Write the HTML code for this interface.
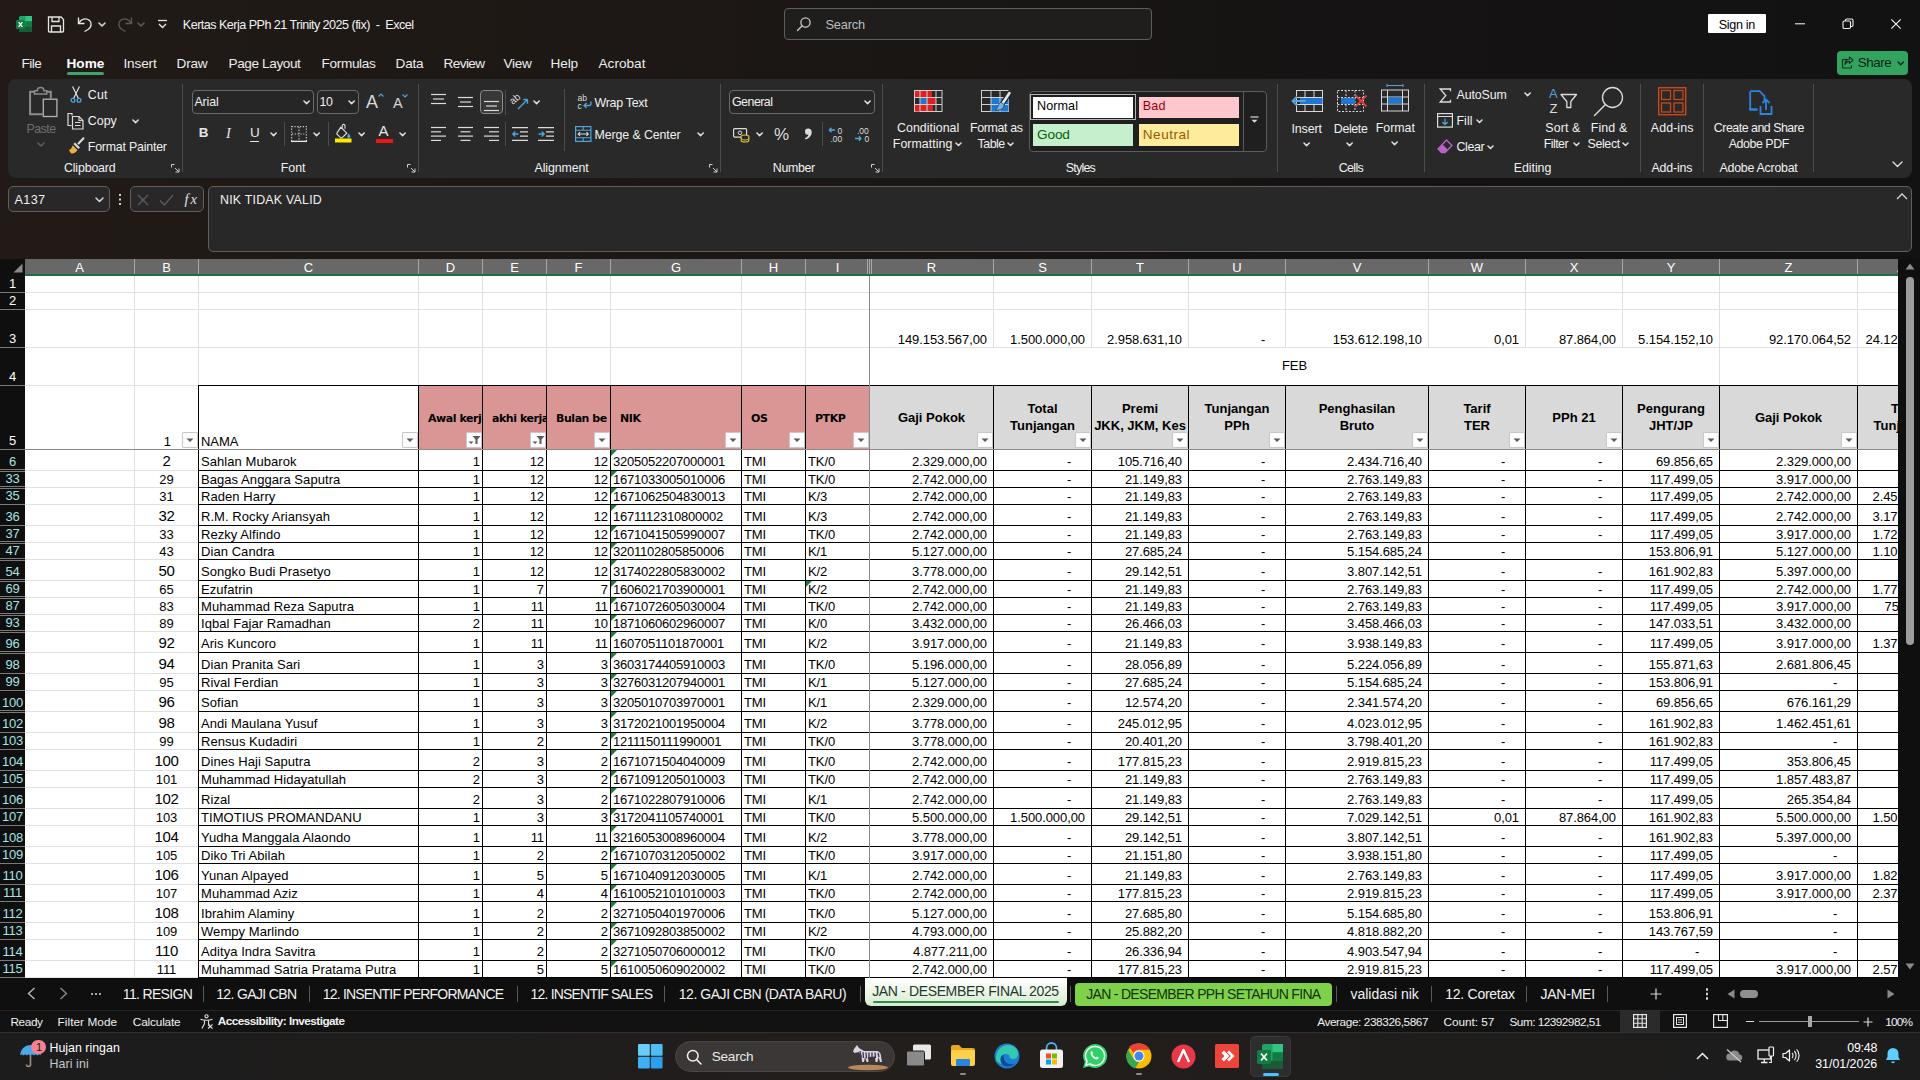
<!DOCTYPE html>
<html lang="id"><head><meta charset="utf-8"><title>Kertas Kerja PPh 21 Trinity 2025 (fix) - Excel</title>
<style>
html,body{margin:0;padding:0}
body{width:1920px;height:1080px;overflow:hidden;position:relative;background:linear-gradient(90deg,#211a16 0,#1d1815 35%,#151313 70%,#131212 100%);font-family:"Liberation Sans",sans-serif}
i{font-style:normal;display:block}

.ab{position:absolute;display:block}
svg.ab{overflow:visible}
.t{position:absolute;white-space:pre}
.bxr{box-sizing:border-box;border:1px solid #6a6a6a;border-radius:4px;background:#262626}

.sheet{position:absolute;left:0;top:0;width:1898px;height:978px;overflow:hidden}
.sheet:before{content:"";position:absolute;left:25px;top:276px;width:1873px;height:702px;background:#fff}
.gv{position:absolute;width:1px;background:#e1e1e1}
.gh{position:absolute;height:1px;background:#e1e1e1}
.merge{position:absolute;background:#fff}
.bx{position:absolute;box-sizing:border-box;border:1px solid #000}
.bx.pink{background:#da9694}
.bx.gray{background:#d9d9d9}
.c13{font:13px/16px "Liberation Sans",sans-serif;color:#000;letter-spacing:-0.08px;white-space:nowrap}
.c15{font:15px/18px "Liberation Sans",sans-serif;color:#000;letter-spacing:-0.3px;white-space:nowrap}
.nik{letter-spacing:-0.23px}
.nm{letter-spacing:0.06px}
.ph{position:absolute;left:9px;top:25px;font:bold 11px/16px "DejaVu Sans",sans-serif;color:#000;white-space:nowrap;letter-spacing:-0.45px}
.bx.pink{overflow:hidden}
.gh2{position:absolute;left:0;right:0;top:50%;margin-top:-1px;transform:translateY(-50%);text-align:center;font:bold 13px/17px "Liberation Sans",sans-serif;color:#000;white-space:nowrap;letter-spacing:0px}
.bx.gray{overflow:hidden}
.fb{position:absolute;width:16px;height:16px;background:#fcfcfc;box-sizing:border-box;border:1px solid #c8c8c8;border-radius:1px}
.fb svg{position:absolute;left:-1px;top:-1px}
.tri{position:absolute;width:0;height:0;border-top:6px solid #1e7d3c;border-right:6px solid transparent}
.colhdr{position:absolute;left:25px;top:259px;width:1873px;height:15px;background:#686868;border-bottom:2px solid #1b7145;overflow:hidden}
.colhdr .ch{position:absolute;top:1px;height:15px;margin-left:-25px;font:13px/16px "Liberation Sans",sans-serif;color:#fff;text-align:center}
.colhdr .chl{position:absolute;top:0;width:1px;height:15px;margin-left:-25px;background:#a8a8a8}
.corner{position:absolute;left:0;top:259px;width:25px;height:17px;background:#0f0f0f}
.rowhdr{position:absolute;left:0;top:0;width:25px;height:978px;overflow:hidden}
.rowhdr:before{content:"";position:absolute;left:0;top:276px;width:25px;height:702px;background:#0f0f0f}
.rh{position:absolute;left:0;width:25px;font:13px "Liberation Sans",sans-serif;color:#fff;text-align:center;letter-spacing:-0.3px;overflow:hidden}
.rh.f{color:#a6e3e3}
.rhl{position:absolute;left:0;width:25px;height:1px;background:#7a7a7a}
</style></head>
<body>
<div id="titlebar">
<svg class="ab" style="left:16px;top:16px" width="16" height="16" viewBox="0 0 16 16"><rect x="3" y="0" width="13" height="16" rx="1.5" fill="#21a366"/><rect x="9.5" y="0" width="6.5" height="5.3" fill="#33c481"/><rect x="9.5" y="5.3" width="6.5" height="5.3" fill="#107c41"/><rect x="3" y="10.6" width="13" height="5.4" fill="#185c37"/><rect x="0" y="4" width="9" height="9" rx="1" fill="#107c41"/><path d="M2.6 6.2L6.4 10.8M6.4 6.2L2.6 10.8" stroke="#fff" stroke-width="1.3"/></svg>
<svg class="ab" style="left:47px;top:16px" width="18" height="17" viewBox="0 0 18 17"><path d="M1.5 1h12.5l2.5 2.5V15a1 1 0 0 1-1 1H2.5a1 1 0 0 1-1-1z" fill="none" stroke="#e6e6e6" stroke-width="1.3"/><path d="M5 1v4.5h7V1M4.5 16v-6h9v6" fill="none" stroke="#e6e6e6" stroke-width="1.3"/></svg>
<svg class="ab" style="left:76px;top:15px" width="18" height="18" viewBox="0 0 18 18"><path d="M2.5 2.5V8.5H8.5" fill="none" stroke="#e6e6e6" stroke-width="1.4"/><path d="M2.8 8.2C5 4 10 2.5 13.3 5.3c3 2.6 2.2 7-1.3 9.2L8.5 16.5" fill="none" stroke="#e6e6e6" stroke-width="1.4"/></svg>
<svg class="ab" style="left:98.00px;top:21.50px" width="8" height="5.0" viewBox="-1 -1 8 5.0"><path d="M0 0 L3.0 3.0 L6 0" fill="none" stroke="#d8d8d8" stroke-width="1.6" stroke-linecap="round" stroke-linejoin="round"/></svg>
<svg class="ab" style="left:116px;top:15px" width="18" height="18" viewBox="0 0 18 18"><path d="M15.5 2.5V8.5H9.5" fill="none" stroke="#5c5a58" stroke-width="1.4"/><path d="M15.2 8.2C13 4 8 2.5 4.7 5.3c-3 2.6-2.2 7 1.3 9.2L9.5 16.5" fill="none" stroke="#5c5a58" stroke-width="1.4"/></svg>
<svg class="ab" style="left:137.00px;top:21.50px" width="8" height="5.0" viewBox="-1 -1 8 5.0"><path d="M0 0 L3.0 3.0 L6 0" fill="none" stroke="#5c5a58" stroke-width="1.6" stroke-linecap="round" stroke-linejoin="round"/></svg>
<svg class="ab" style="left:157px;top:19px" width="11" height="10" viewBox="0 0 11 10"><path d="M1 1.5H10" stroke="#e6e6e6" stroke-width="1.3"/><path d="M2 5L5.5 8.5L9 5" fill="none" stroke="#e6e6e6" stroke-width="1.3"/></svg>
<span class="t" style="left:182.80px;top:15.20px;font: 400 12.6px/20px 'Liberation Sans',sans-serif;color:#f2f2f2;letter-spacing:-0.531px">Kertas Kerja PPh 21 Trinity 2025 (fix)  -  Excel</span>
<div class="ab" style="left:784px;top:8px;width:368px;height:32px;box-sizing:border-box;border:1px solid #5f5d5b;border-radius:4px;background:#1f1e1d"></div>
<svg class="ab" style="left:796px;top:16px" width="16" height="16" viewBox="0 0 16 16"><circle cx="9.5" cy="6.5" r="4.6" fill="none" stroke="#c8c8c8" stroke-width="1.3"/><path d="M6.2 9.8L1.5 14.5" stroke="#c8c8c8" stroke-width="1.4" stroke-linecap="round"/></svg>
<span class="t" style="left:825.50px;top:15.00px;font: 400 12.8px/20px 'Liberation Sans',sans-serif;color:#bdbdbd;letter-spacing:-0.174px">Search</span>
<div class="ab" style="left:1708px;top:14px;width:58px;height:19px;background:#fff;border-radius:1px"></div>
<span class="t" style="left:1718.80px;top:15.00px;font: 400 12.6px/20px 'Liberation Sans',sans-serif;color:#000;letter-spacing:-0.331px">Sign in</span>
<svg class="ab" style="left:1794px;top:18px" width="12" height="12" viewBox="0 0 12 12"><path d="M1 5.8H11" stroke="#f0f0f0" stroke-width="1.1"/></svg>
<svg class="ab" style="left:1842px;top:18px" width="12" height="12" viewBox="0 0 12 12"><rect x="1" y="3" width="7.5" height="7.5" rx="1.2" fill="none" stroke="#f0f0f0" stroke-width="1.1"/><path d="M3.5 3V2.2A1.2 1.2 0 0 1 4.7 1H9.5A1.5 1.5 0 0 1 11 2.5V7.3A1.2 1.2 0 0 1 9.8 8.5H8.8" fill="none" stroke="#f0f0f0" stroke-width="1.1"/></svg>
<svg class="ab" style="left:1890px;top:18px" width="12" height="12" viewBox="0 0 12 12"><path d="M1.3 1.3L10.7 10.7M10.7 1.3L1.3 10.7" stroke="#f0f0f0" stroke-width="1.2"/></svg>
<span class="t" style="left:21.50px;top:53.80px;font: 400 13.6px/20px 'Liberation Sans',sans-serif;color:#ececec;letter-spacing:-0.527px">File</span>
<span class="t" style="left:66.50px;top:53.80px;font: 700 13.6px/20px 'Liberation Sans',sans-serif;color:#fff;letter-spacing:0.055px">Home</span>
<span class="t" style="left:123.50px;top:53.80px;font: 400 13.6px/20px 'Liberation Sans',sans-serif;color:#ececec;letter-spacing:-0.167px">Insert</span>
<span class="t" style="left:176.50px;top:53.80px;font: 400 13.6px/20px 'Liberation Sans',sans-serif;color:#ececec;letter-spacing:-0.184px">Draw</span>
<span class="t" style="left:228.50px;top:53.80px;font: 400 13.6px/20px 'Liberation Sans',sans-serif;color:#ececec;letter-spacing:-0.395px">Page Layout</span>
<span class="t" style="left:321.50px;top:53.80px;font: 400 13.6px/20px 'Liberation Sans',sans-serif;color:#ececec;letter-spacing:-0.332px">Formulas</span>
<span class="t" style="left:395.50px;top:53.80px;font: 400 13.6px/20px 'Liberation Sans',sans-serif;color:#ececec;letter-spacing:-0.180px">Data</span>
<span class="t" style="left:443.50px;top:53.80px;font: 400 13.6px/20px 'Liberation Sans',sans-serif;color:#ececec;letter-spacing:-0.596px">Review</span>
<span class="t" style="left:503.50px;top:53.80px;font: 400 13.6px/20px 'Liberation Sans',sans-serif;color:#ececec;letter-spacing:-0.305px">View</span>
<span class="t" style="left:550.50px;top:53.80px;font: 400 13.6px/20px 'Liberation Sans',sans-serif;color:#ececec;letter-spacing:-0.117px">Help</span>
<span class="t" style="left:598.50px;top:53.80px;font: 400 13.6px/20px 'Liberation Sans',sans-serif;color:#ececec;letter-spacing:0.020px">Acrobat</span>
<i class="ab" style="left:67px;top:72px;width:37px;height:3px;border-radius:1.5px;background:#3fa56c"></i>
<div class="ab" style="left:1837px;top:51px;width:71px;height:24px;border-radius:4px;background:#33a460"></div>
<svg class="ab" style="left:1841px;top:56px" width="13" height="13" viewBox="0 0 13 13"><path d="M6 3.5H2.5a1 1 0 0 0-1 1v6.5a1 1 0 0 0 1 1h7a1 1 0 0 0 1-1V9.5" fill="none" stroke="#10301c" stroke-width="1.2"/><path d="M8.5 1l3.5 3.2-3.5 3.2V5.4C6 5.4 4.8 6.4 4 8.5 4 5.3 5.6 3.2 8.5 3z" fill="none" stroke="#10301c" stroke-width="1.1" stroke-linejoin="round"/></svg>
<span class="t" style="left:1857.80px;top:53.30px;font: 400 13.4px/20px 'Liberation Sans',sans-serif;color:#0b1f12;letter-spacing:-0.447px">Share</span>
<svg class="ab" style="left:1897.25px;top:61.12px" width="7.5" height="4.75" viewBox="-1 -1 7.5 4.75"><path d="M0 0 L2.75 2.75 L5.5 0" fill="none" stroke="#0b1f12" stroke-width="1.2" stroke-linecap="round" stroke-linejoin="round"/></svg>
</div>
<div id="ribbon">
<div class="ab" style="left:8px;top:79px;width:1904px;height:99px;border-radius:8px;background:#292929"></div>
<svg class="ab" style="left:29px;top:85px" width="29" height="33" viewBox="0 0 29 33"><path d="M13.500 29.200H1.100V6.700H21.800V13.500" fill="none" stroke="#8c8c8c" stroke-width="2"/><path d="M5.500 9V5.800h2.800a3.300 3.300 0 0 1 6.600 0h2.800V9z" fill="#292929" stroke="#8c8c8c" stroke-width="1.600"/><rect x="14.300" y="14.200" width="13.600" height="17.300" fill="#292929" stroke="#b4b4b4" stroke-width="1.300"/></svg>
<span class="t" style="left:26.50px;top:118.80px;font: 400 12.4px/20px 'Liberation Sans',sans-serif;color:#6f6f6f;letter-spacing:-0.537px">Paste</span>
<svg class="ab" style="left:36.50px;top:141.50px" width="8" height="5.0" viewBox="-1 -1 8 5.0"><path d="M0 0 L3.0 3.0 L6 0" fill="none" stroke="#5e5e5e" stroke-width="1.6" stroke-linecap="round" stroke-linejoin="round"/></svg>
<svg class="ab" style="left:69.5px;top:85.5px" width="12" height="18" viewBox="0 0 12 18"><path d="M2.600 0.500L8.300 12.300M9.400 0.500L3.700 12.300" stroke="#e0e0e0" stroke-width="1.200" fill="none"/><circle cx="3" cy="14.300" r="1.900" fill="none" stroke="#4ea6dc" stroke-width="1.300"/><circle cx="9" cy="14.300" r="1.900" fill="none" stroke="#4ea6dc" stroke-width="1.300"/></svg>
<span class="t" style="left:87.80px;top:85.00px;font: 400 12.4px/20px 'Liberation Sans',sans-serif;color:#f0f0f0;letter-spacing:0.134px">Cut</span>
<svg class="ab" style="left:67px;top:112px" width="18" height="18" viewBox="0 0 18 18"><path d="M5 3.5V1.5h-4v12h3.5" fill="none" stroke="#dcdcdc" stroke-width="1.2"/><path d="M5.5 4.5h6.5l4 4v8.5H5.5z" fill="none" stroke="#dcdcdc" stroke-width="1.2"/><path d="M12 4.5v4h4" fill="none" stroke="#dcdcdc" stroke-width="1.1"/><path d="M8 10.5h5.5M8 13.5h5.5" stroke="#dcdcdc" stroke-width="1"/></svg>
<span class="t" style="left:87.80px;top:111.30px;font: 400 12.4px/20px 'Liberation Sans',sans-serif;color:#f0f0f0;letter-spacing:0.016px">Copy</span>
<svg class="ab" style="left:132.40px;top:118.70px" width="7.2" height="4.6" viewBox="-1 -1 7.2 4.6"><path d="M0 0 L2.6 2.6 L5.2 0" fill="none" stroke="#dadada" stroke-width="1.6" stroke-linecap="round" stroke-linejoin="round"/></svg>
<svg class="ab" style="left:68px;top:137px" width="18" height="18" viewBox="0 0 18 18"><path d="M10.5 6.5L15.5 1.2" stroke="#dcdcdc" stroke-width="2" stroke-linecap="round"/><path d="M7 5.5l5 5-1.6 1.6-5-5z" fill="#dcdcdc"/><path d="M4.6 8.2l4.8 4.8c-1.2 2.4-3.6 3.8-6.2 3.4C1.6 14.6 1 13 1 13c1.6-.4 3-2.4 3.6-4.8z" fill="#e8b04a"/></svg>
<span class="t" style="left:87.80px;top:137.00px;font: 400 12.4px/20px 'Liberation Sans',sans-serif;color:#f0f0f0;letter-spacing:-0.211px">Format Painter</span>
<span class="t" style="left:64.00px;top:158.30px;font: 400 12.4px/20px 'Liberation Sans',sans-serif;color:#f0f0f0;letter-spacing:-0.172px">Clipboard</span>
<svg class="ab" style="left:171px;top:164px" width="9" height="9" viewBox="0 0 9 9"><path d="M0.5 3.5V0.5H3.5 M4 4 L8 8 M8 4.5V8H4.5" fill="none" stroke="#cfcfcf" stroke-width="1"/></svg>
<i class="ab" style="left:182.0px;top:84px;width:1px;height:88px;background:#4d4d4d"></i>
<div class="ab bxr" style="left:191.5px;top:90px;width:122px;height:24px"></div>
<span class="t" style="left:194.50px;top:91.80px;font: 400 12.4px/20px 'Liberation Sans',sans-serif;color:#f0f0f0;letter-spacing:-0.159px">Arial</span>
<svg class="ab" style="left:303.40px;top:99.70px" width="7.2" height="4.6" viewBox="-1 -1 7.2 4.6"><path d="M0 0 L2.6 2.6 L5.2 0" fill="none" stroke="#dadada" stroke-width="1.6" stroke-linecap="round" stroke-linejoin="round"/></svg>
<div class="ab bxr" style="left:316.5px;top:90px;width:42.5px;height:24px"></div>
<span class="t" style="left:319.50px;top:91.80px;font: 400 12.4px/20px 'Liberation Sans',sans-serif;color:#f0f0f0;letter-spacing:-0.498px">10</span>
<svg class="ab" style="left:348.40px;top:99.70px" width="7.2" height="4.6" viewBox="-1 -1 7.2 4.6"><path d="M0 0 L2.6 2.6 L5.2 0" fill="none" stroke="#dadada" stroke-width="1.6" stroke-linecap="round" stroke-linejoin="round"/></svg>
<span class="t" style="left:366.00px;top:91.50px;font: 400 18px/20px 'Liberation Sans',sans-serif;color:#d8d8d8;letter-spacing:1.484px">A</span>
<svg class="ab" style="left:378px;top:93px" width="6" height="4" viewBox="0 0 6 4"><path d="M0.5 3.5L3 1L5.5 3.5" fill="none" stroke="#4ea6dc" stroke-width="1.1"/></svg>
<span class="t" style="left:393.00px;top:93.00px;font: 400 14.5px/20px 'Liberation Sans',sans-serif;color:#d8d8d8;letter-spacing:1.328px">A</span>
<svg class="ab" style="left:402px;top:94px" width="6" height="4" viewBox="0 0 6 4"><path d="M0.5 0.5L3 3L5.5 0.5" fill="none" stroke="#4ea6dc" stroke-width="1.1"/></svg>
<span class="t" style="left:198.80px;top:123.30px;font: 700 13.4px/20px 'Liberation Sans',sans-serif;color:#e6e6e6;letter-spacing:-0.472px">B</span>
<span class="t" style="left:226.00px;top:123.30px;font:italic 400 14.5px/20px 'Liberation Serif',serif;color:#e6e6e6;letter-spacing:1.656px">I</span>
<span class="t" style="left:250.00px;top:122.50px;font: 400 13.5px/20px 'Liberation Sans',sans-serif;color:#e6e6e6;letter-spacing:-0.750px">U</span>
<i class="ab" style="left:250px;top:140.5px;width:9px;height:1.2px;background:#e6e6e6"></i>
<svg class="ab" style="left:269.70px;top:131.70px" width="7.2" height="4.6" viewBox="-1 -1 7.2 4.6"><path d="M0 0 L2.6 2.6 L5.2 0" fill="none" stroke="#dadada" stroke-width="1.6" stroke-linecap="round" stroke-linejoin="round"/></svg>
<i class="ab" style="left:284.0px;top:122px;width:1px;height:24px;background:#4d4d4d"></i>
<svg class="ab" style="left:290.5px;top:125.5px" width="16" height="16" viewBox="0 0 16 16"><rect x="0.6" y="0.6" width="14.8" height="14.8" fill="none" stroke="#cfcfcf" stroke-width="1.2" stroke-dasharray="1.2 1.6"/><path d="M8 1V15M1 8H15" stroke="#cfcfcf" stroke-width="1.2" stroke-dasharray="1.2 1.6"/><path d="M0 15.4H16" stroke="#e6e6e6" stroke-width="1.3"/></svg>
<svg class="ab" style="left:313.40px;top:131.70px" width="7.2" height="4.6" viewBox="-1 -1 7.2 4.6"><path d="M0 0 L2.6 2.6 L5.2 0" fill="none" stroke="#dadada" stroke-width="1.6" stroke-linecap="round" stroke-linejoin="round"/></svg>
<i class="ab" style="left:327.8px;top:122px;width:1px;height:24px;background:#4d4d4d"></i>
<svg class="ab" style="left:335px;top:124px" width="17" height="19" viewBox="0 0 17 19"><path d="M5.8 3.2l6 6-4.6 4.4a1.2 1.2 0 0 1-1.7 0L2.2 10.300a1.2 1.2 0 0 1 0-1.7z" fill="none" stroke="#dcdcdc" stroke-width="1.2"/><path d="M7.2 4.400V1.8a1.400 1.400 0 0 1 2.800 0v3" fill="none" stroke="#dcdcdc" stroke-width="1.1"/><path d="M13.8 9.5c1 1.400 1.600 2.300 1.600 3a1.600 1.600 0 0 1-3.200 0c0-.7.600-1.600 1.600-3z" fill="#4ea6dc"/><rect x="0" y="14.5" width="16.5" height="4" fill="#ffeb00"/></svg>
<svg class="ab" style="left:357.70px;top:131.70px" width="7.2" height="4.6" viewBox="-1 -1 7.2 4.6"><path d="M0 0 L2.6 2.6 L5.2 0" fill="none" stroke="#dadada" stroke-width="1.6" stroke-linecap="round" stroke-linejoin="round"/></svg>
<span class="t" style="left:378.50px;top:121.00px;font: 400 15px/20px 'Liberation Sans',sans-serif;color:#e6e6e6;letter-spacing:1.484px">A</span>
<i class="ab" style="left:376px;top:138.5px;width:16.5px;height:4px;background:#f01414"></i>
<svg class="ab" style="left:398.70px;top:131.70px" width="7.2" height="4.6" viewBox="-1 -1 7.2 4.6"><path d="M0 0 L2.6 2.6 L5.2 0" fill="none" stroke="#dadada" stroke-width="1.6" stroke-linecap="round" stroke-linejoin="round"/></svg>
<span class="t" style="left:280.80px;top:158.30px;font: 400 12.4px/20px 'Liberation Sans',sans-serif;color:#f0f0f0;letter-spacing:-0.024px">Font</span>
<svg class="ab" style="left:407px;top:164px" width="9" height="9" viewBox="0 0 9 9"><path d="M0.5 3.5V0.5H3.5 M4 4 L8 8 M8 4.5V8H4.5" fill="none" stroke="#cfcfcf" stroke-width="1"/></svg>
<i class="ab" style="left:418.3px;top:84px;width:1px;height:88px;background:#4d4d4d"></i>
<svg class="ab" style="left:431px;top:93.5px" width="15" height="14" viewBox="0 0 15 14"><path d="M0.0 0.5H15.0" stroke="#dcdcdc" stroke-width="1.2"/><path d="M2.0 5.0H13.0" stroke="#dcdcdc" stroke-width="1.2"/><path d="M0.0 9.5H15.0" stroke="#dcdcdc" stroke-width="1.2"/></svg>
<svg class="ab" style="left:457.5px;top:97px" width="15" height="14" viewBox="0 0 15 14"><path d="M0.0 0.5H15.0" stroke="#dcdcdc" stroke-width="1.2"/><path d="M2.0 5.0H13.0" stroke="#dcdcdc" stroke-width="1.2"/><path d="M0.0 9.5H15.0" stroke="#dcdcdc" stroke-width="1.2"/></svg>
<div class="ab" style="left:479.500px;top:90px;width:23.5px;height:24px;box-sizing:border-box;border:1px solid #8a8a8a;border-radius:4px;background:#383838"></div>
<svg class="ab" style="left:484px;top:100.5px" width="15" height="14" viewBox="0 0 15 14"><path d="M0.0 0.5H15.0" stroke="#dcdcdc" stroke-width="1.2"/><path d="M2.0 5.0H13.0" stroke="#dcdcdc" stroke-width="1.2"/><path d="M0.0 9.5H15.0" stroke="#dcdcdc" stroke-width="1.2"/></svg>
<i class="ab" style="left:505.3px;top:90px;width:1px;height:25px;background:#4d4d4d"></i>
<svg class="ab" style="left:512px;top:92px" width="18" height="18" viewBox="0 0 18 18"><text x="-1" y="10" font-family="Liberation Sans" font-size="10" fill="#dcdcdc" transform="rotate(-40 4 9)">ab</text><path d="M6 17L15.500 7.500M15.500 7.500h-4.200M15.500 7.500v4.200" fill="none" stroke="#4ea6dc" stroke-width="1.300"/></svg>
<svg class="ab" style="left:532.70px;top:99.70px" width="7.2" height="4.6" viewBox="-1 -1 7.2 4.6"><path d="M0 0 L2.6 2.6 L5.2 0" fill="none" stroke="#dadada" stroke-width="1.6" stroke-linecap="round" stroke-linejoin="round"/></svg>
<svg class="ab" style="left:431px;top:127px" width="15" height="18" viewBox="0 0 15 18"><path d="M0 0.5H15" stroke="#dcdcdc" stroke-width="1.2"/><path d="M0 4.8H10" stroke="#dcdcdc" stroke-width="1.2"/><path d="M0 9.1H15" stroke="#dcdcdc" stroke-width="1.2"/><path d="M0 13.399999999999999H10" stroke="#dcdcdc" stroke-width="1.2"/></svg>
<svg class="ab" style="left:457.5px;top:127px" width="15" height="18" viewBox="0 0 15 18"><path d="M0.0 0.5H15.0" stroke="#dcdcdc" stroke-width="1.2"/><path d="M2.5 4.8H12.5" stroke="#dcdcdc" stroke-width="1.2"/><path d="M0.0 9.1H15.0" stroke="#dcdcdc" stroke-width="1.2"/><path d="M2.5 13.399999999999999H12.5" stroke="#dcdcdc" stroke-width="1.2"/></svg>
<svg class="ab" style="left:483.5px;top:127px" width="15" height="18" viewBox="0 0 15 18"><path d="M0 0.5H15" stroke="#dcdcdc" stroke-width="1.2"/><path d="M5 4.8H15" stroke="#dcdcdc" stroke-width="1.2"/><path d="M0 9.1H15" stroke="#dcdcdc" stroke-width="1.2"/><path d="M5 13.399999999999999H15" stroke="#dcdcdc" stroke-width="1.2"/></svg>
<i class="ab" style="left:505.3px;top:122px;width:1px;height:24px;background:#4d4d4d"></i>
<svg class="ab" style="left:512px;top:127px" width="16" height="14" viewBox="0 0 16 14"><path d="M0 .6H16M8 4.900H16M8 9.200H16M0 13.400H16" stroke="#dcdcdc" stroke-width="1.2"/><path d="M6.500 7H0.800M3.300 4.500L0.800 7l2.500 2.500" fill="none" stroke="#4ea6dc" stroke-width="1.300"/></svg>
<svg class="ab" style="left:538px;top:127px" width="16" height="14" viewBox="0 0 16 14"><path d="M0 .6H16M8 4.900H16M8 9.200H16M0 13.400H16" stroke="#dcdcdc" stroke-width="1.2"/><path d="M0.500 7H6.200M3.700 4.500L6.200 7l-2.500 2.500" fill="none" stroke="#4ea6dc" stroke-width="1.300"/></svg>
<i class="ab" style="left:564.0px;top:89px;width:1px;height:62px;background:#4d4d4d"></i>
<svg class="ab" style="left:576.5px;top:94px" width="17" height="17" viewBox="0 0 17 17"><text x="0.500" y="7" font-family="Liberation Sans" font-size="8.500" fill="#dcdcdc">ab</text><text x="0.500" y="14.500" font-family="Liberation Sans" font-size="8.500" fill="#dcdcdc">c</text><path d="M14 7.500v2a2 2 0 0 1 -2 2H7.200M9.600 9L7 11.500l2.600 2.500" fill="none" stroke="#4ea6dc" stroke-width="1.300"/></svg>
<span class="t" style="left:594.50px;top:92.50px;font: 400 12.4px/20px 'Liberation Sans',sans-serif;color:#f0f0f0;letter-spacing:-0.259px">Wrap Text</span>
<svg class="ab" style="left:574.5px;top:126px" width="17" height="16" viewBox="0 0 17 16"><rect x="0.600" y="0.600" width="15.300" height="14.800" fill="none" stroke="#4ea6dc" stroke-width="1.200"/><path d="M0.600 4.200H16M0.600 11.800H16M8.200 0.600V4.200M8.200 11.800V15.400" stroke="#4ea6dc" stroke-width="1.100"/><path d="M3.200 8H13.300M5 6.200L3.200 8 5 9.800M11.500 6.200L13.300 8l-1.800 1.800" fill="none" stroke="#dcdcdc" stroke-width="1.100"/></svg>
<span class="t" style="left:594.50px;top:124.50px;font: 400 12.4px/20px 'Liberation Sans',sans-serif;color:#f0f0f0;letter-spacing:-0.105px">Merge &amp; Center</span>
<svg class="ab" style="left:696.90px;top:132.20px" width="7.2" height="4.6" viewBox="-1 -1 7.2 4.6"><path d="M0 0 L2.6 2.6 L5.2 0" fill="none" stroke="#dadada" stroke-width="1.6" stroke-linecap="round" stroke-linejoin="round"/></svg>
<span class="t" style="left:534.50px;top:158.30px;font: 400 12.4px/20px 'Liberation Sans',sans-serif;color:#f0f0f0;letter-spacing:-0.123px">Alignment</span>
<svg class="ab" style="left:708.5px;top:164px" width="9" height="9" viewBox="0 0 9 9"><path d="M0.5 3.5V0.5H3.5 M4 4 L8 8 M8 4.5V8H4.5" fill="none" stroke="#cfcfcf" stroke-width="1"/></svg>
<i class="ab" style="left:720.3px;top:84px;width:1px;height:88px;background:#4d4d4d"></i>
<div class="ab bxr" style="left:729px;top:90px;width:145.500px;height:24px"></div>
<span class="t" style="left:732.00px;top:91.80px;font: 400 12.4px/20px 'Liberation Sans',sans-serif;color:#f0f0f0;letter-spacing:-0.513px">General</span>
<svg class="ab" style="left:864.40px;top:99.70px" width="7.2" height="4.6" viewBox="-1 -1 7.2 4.6"><path d="M0 0 L2.6 2.6 L5.2 0" fill="none" stroke="#dadada" stroke-width="1.6" stroke-linecap="round" stroke-linejoin="round"/></svg>
<svg class="ab" style="left:733px;top:126.5px" width="17" height="16" viewBox="0 0 17 16"><rect x="0.600" y="1.600" width="13" height="8.500" rx="1" fill="none" stroke="#dcdcdc" stroke-width="1.200"/><circle cx="7" cy="5.800" r="1.800" fill="none" stroke="#dcdcdc" stroke-width="1"/><ellipse cx="12" cy="9.500" rx="3.800" ry="1.500" fill="#292929" stroke="#e8c840" stroke-width="1.100"/><path d="M8.200 9.500v4c0 .8 1.700 1.500 3.800 1.500s3.800-.7 3.800-1.500v-4" fill="#292929" stroke="#e8c840" stroke-width="1.100"/><path d="M8.200 11.500c0 .8 1.700 1.500 3.800 1.500s3.800-.7 3.800-1.500" fill="none" stroke="#e8c840" stroke-width="1"/></svg>
<svg class="ab" style="left:755.70px;top:132.20px" width="7.2" height="4.6" viewBox="-1 -1 7.2 4.6"><path d="M0 0 L2.6 2.6 L5.2 0" fill="none" stroke="#dadada" stroke-width="1.6" stroke-linecap="round" stroke-linejoin="round"/></svg>
<span class="t" style="left:774.00px;top:124.50px;font: 400 17px/20px 'Liberation Sans',sans-serif;color:#dcdcdc;letter-spacing:0.875px">%</span>
<svg class="ab" style="left:803px;top:128px" width="10" height="13" viewBox="0 0 10 13"><path d="M5.300 0.500a3.300 3.300 0 0 1 3.400 3.500c0 3.800-2.600 6.600-6.200 7.400l-.500-1.300c1.900-.700 3.100-1.900 3.400-3.400A3 3 0 0 1 2 3.800 3.200 3.200 0 0 1 5.300 .500z" fill="#dcdcdc"/></svg>
<i class="ab" style="left:821.5px;top:122px;width:1px;height:24px;background:#4d4d4d"></i>
<svg class="ab" style="left:828px;top:125.5px" width="18" height="17" viewBox="0 0 18 17"><path d="M7 4H1.300M3.500 1.800L1.300 4l2.200 2.200" fill="none" stroke="#4ea6dc" stroke-width="1.300"/><text x="9.500" y="7.500" font-family="Liberation Sans" font-size="8.500" fill="#dcdcdc">0</text><text x="2.500" y="16" font-family="Liberation Sans" font-size="8.500" fill="#dcdcdc">.00</text></svg>
<svg class="ab" style="left:854px;top:125.5px" width="18" height="17" viewBox="0 0 18 17"><text x="3" y="7.500" font-family="Liberation Sans" font-size="8.500" fill="#dcdcdc">.00</text><path d="M1 12.500H7M4.800 10.300L7 12.500l-2.200 2.200" fill="none" stroke="#4ea6dc" stroke-width="1.300"/><text x="10.500" y="16" font-family="Liberation Sans" font-size="8.500" fill="#dcdcdc">0</text></svg>
<span class="t" style="left:772.80px;top:158.30px;font: 400 12.4px/20px 'Liberation Sans',sans-serif;color:#f0f0f0;letter-spacing:-0.346px">Number</span>
<svg class="ab" style="left:871px;top:164px" width="9" height="9" viewBox="0 0 9 9"><path d="M0.5 3.5V0.5H3.5 M4 4 L8 8 M8 4.5V8H4.5" fill="none" stroke="#cfcfcf" stroke-width="1"/></svg>
<i class="ab" style="left:882.0px;top:84px;width:1px;height:88px;background:#4d4d4d"></i>
<svg class="ab" style="left:914px;top:90px" width="29" height="22" viewBox="0 0 29 22"><rect x="0.500" y="0.500" width="27.500" height="21" fill="none" stroke="#d0d0d0" stroke-width="1"/><rect x="1" y="1" width="17" height="6.500" fill="#e02020"/><rect x="6" y="7.500" width="7" height="7" fill="#1e78d2"/><rect x="13" y="7.500" width="9" height="7" fill="#e02020"/><rect x="1" y="14.500" width="5" height="7" fill="#e02020"/><rect x="6" y="14.500" width="13" height="6.500" fill="#e02020"/><path d="M0.500 7.500H28M0.500 14.500H28M6 0.500V21.500M13 0.500V21.500M22 0.500V21.500" stroke="#d0d0d0" stroke-width="1"/></svg>
<span class="t" style="left:897.00px;top:118.00px;font: 400 12.4px/20px 'Liberation Sans',sans-serif;color:#f0f0f0;letter-spacing:0.027px">Conditional</span>
<span class="t" style="left:892.80px;top:133.80px;font: 400 12.4px/20px 'Liberation Sans',sans-serif;color:#f0f0f0;letter-spacing:0.028px">Formatting</span>
<svg class="ab" style="left:955.00px;top:141.75px" width="7" height="4.5" viewBox="-1 -1 7 4.5"><path d="M0 0 L2.5 2.5 L5 0" fill="none" stroke="#dadada" stroke-width="1.6" stroke-linecap="round" stroke-linejoin="round"/></svg>
<svg class="ab" style="left:981px;top:90px" width="31" height="25" viewBox="0 0 31 25"><rect x="0.500" y="0.500" width="27" height="21" fill="none" stroke="#d0d0d0" stroke-width="1"/><rect x="10" y="7.500" width="17.500" height="14" fill="#1e78d2"/><path d="M0.500 7.500H27.500M0.500 14.500H27.500M10 0.500V21.500M19 0.500V21.500" stroke="#d0d0d0" stroke-width="1"/><path d="M28.500 3L21.500 13.500" stroke="#292929" stroke-width="5" stroke-linecap="round"/><path d="M28.500 3L21.500 13.500" stroke="#e6e6e6" stroke-width="2.600" stroke-linecap="round"/><path d="M19.800 12.200l3.400 2.400c0 3.600-3.400 6.200-9 5.400 2.800-1.400 2.600-6 5.600-7.800z" fill="#6fb5e8" stroke="#292929" stroke-width=".600"/></svg>
<span class="t" style="left:970.00px;top:118.00px;font: 400 12.4px/20px 'Liberation Sans',sans-serif;color:#f0f0f0;letter-spacing:-0.365px">Format as</span>
<span class="t" style="left:977.50px;top:133.80px;font: 400 12.4px/20px 'Liberation Sans',sans-serif;color:#f0f0f0;letter-spacing:-0.465px">Table</span>
<svg class="ab" style="left:1007.00px;top:141.75px" width="7" height="4.5" viewBox="-1 -1 7 4.5"><path d="M0 0 L2.5 2.5 L5 0" fill="none" stroke="#dadada" stroke-width="1.6" stroke-linecap="round" stroke-linejoin="round"/></svg>
<div class="ab" style="left:1028.500px;top:90.500px;width:238.500px;height:61px;box-sizing:border-box;border:1px solid #5c5c5c;border-radius:4px;background:#1f1f1f"></div>
<div class="ab" style="left:1030px;top:94px;width:105.500px;height:26px;box-sizing:border-box;border:1px solid #b4b4b4;background:#1f1f1f"></div>
<div class="ab" style="left:1032.500px;top:96.500px;width:100.500px;height:21.500px;background:#fff"></div>
<div class="ab" style="left:1139.300px;top:96.500px;width:100px;height:21.500px;background:#ffc7ce"></div>
<div class="ab" style="left:1032.500px;top:124.300px;width:100.500px;height:21.500px;background:#c6efce"></div>
<div class="ab" style="left:1139.300px;top:124.300px;width:100px;height:21.500px;background:#ffeb9c"></div>
<span class="t" style="left:1037.00px;top:96.30px;font: 400 12.6px/20px 'Liberation Sans',sans-serif;color:#000;letter-spacing:0.068px">Normal</span>
<span class="t" style="left:1142.80px;top:96.30px;font: 400 12.6px/20px 'Liberation Sans',sans-serif;color:#9c0006;letter-spacing:0.093px">Bad</span>
<span class="t" style="left:1037.00px;top:124.80px;font: 400 13.6px/20px 'Liberation Sans',sans-serif;color:#006100;letter-spacing:-0.116px">Good</span>
<span class="t" style="left:1142.80px;top:124.80px;font: 400 13.6px/20px 'Liberation Sans',sans-serif;color:#9c5700;letter-spacing:0.482px">Neutral</span>
<i class="ab" style="left:1243.0px;top:91px;width:1px;height:60px;background:#5c5c5c"></i>
<svg class="ab" style="left:1250px;top:116px" width="9" height="8" viewBox="0 0 9 8"><path d="M0.500 1H8.500" stroke="#dcdcdc" stroke-width="1.200"/><path d="M1.500 3.800L4.500 6.800l3-3z" fill="#dcdcdc"/></svg>
<span class="t" style="left:1065.80px;top:158.30px;font: 400 12.4px/20px 'Liberation Sans',sans-serif;color:#f0f0f0;letter-spacing:-0.758px">Styles</span>
<i class="ab" style="left:1277.0px;top:84px;width:1px;height:88px;background:#4d4d4d"></i>
<svg class="ab" style="left:1291px;top:90px" width="33" height="22" viewBox="0 0 33 22"><rect x="5.500" y="0.500" width="26" height="21" fill="none" stroke="#d8d8d8" stroke-width="1"/><path d="M5.500 7.500H31.500M5.500 14.500H31.500M14 0.500V21.500M23 0.500V21.500" stroke="#d8d8d8" stroke-width="1"/><rect x="9" y="8" width="22.500" height="6" fill="#1e78d2"/><path d="M14.500 11H1.500M6 6.500L1.500 11 6 15.500" fill="none" stroke="#5aa0dc" stroke-width="1.800"/></svg>
<span class="t" style="left:1291.50px;top:118.80px;font: 400 12.4px/20px 'Liberation Sans',sans-serif;color:#f0f0f0;letter-spacing:-0.117px">Insert</span>
<svg class="ab" style="left:1302.70px;top:142.00px" width="7.2" height="4.6" viewBox="-1 -1 7.2 4.6"><path d="M0 0 L2.6 2.6 L5.2 0" fill="none" stroke="#dadada" stroke-width="1.6" stroke-linecap="round" stroke-linejoin="round"/></svg>
<svg class="ab" style="left:1337px;top:90px" width="31" height="22" viewBox="0 0 31 22"><rect x="0.500" y="0.500" width="26" height="21" fill="none" stroke="#d8d8d8" stroke-width="1" stroke-dasharray="2 1.500"/><path d="M0.500 7.500H26.500M0.500 14.500H26.500M9 0.500V21.500M18 0.500V21.500" stroke="#d8d8d8" stroke-width="1" stroke-dasharray="2 1.500"/><rect x="4" y="8" width="14" height="6" fill="#1e78d2"/><path d="M18.500 5.500L29.500 16.500M29.500 5.500L18.500 16.500" stroke="#e04040" stroke-width="1.800"/></svg>
<span class="t" style="left:1333.80px;top:118.80px;font: 400 12.4px/20px 'Liberation Sans',sans-serif;color:#f0f0f0;letter-spacing:-0.355px">Delete</span>
<svg class="ab" style="left:1346.40px;top:142.00px" width="7.2" height="4.6" viewBox="-1 -1 7.2 4.6"><path d="M0 0 L2.6 2.6 L5.2 0" fill="none" stroke="#dadada" stroke-width="1.6" stroke-linecap="round" stroke-linejoin="round"/></svg>
<svg class="ab" style="left:1381px;top:84px" width="28" height="28" viewBox="0 0 28 28"><path d="M6 1.500H22M6 0V3M22 0V3" stroke="#5aa0dc" stroke-width="1"/><rect x="0.500" y="6" width="27" height="21" fill="none" stroke="#d8d8d8" stroke-width="1"/><path d="M0.500 13H27.500M0.500 20H27.500M6.500 6V27M21.500 6V27" stroke="#d8d8d8" stroke-width="1"/><rect x="7" y="13.500" width="14" height="6" fill="#1e78d2"/></svg>
<span class="t" style="left:1375.80px;top:118.00px;font: 400 12.4px/20px 'Liberation Sans',sans-serif;color:#f0f0f0;letter-spacing:-0.042px">Format</span>
<svg class="ab" style="left:1390.70px;top:141.20px" width="7.2" height="4.6" viewBox="-1 -1 7.2 4.6"><path d="M0 0 L2.6 2.6 L5.2 0" fill="none" stroke="#dadada" stroke-width="1.6" stroke-linecap="round" stroke-linejoin="round"/></svg>
<span class="t" style="left:1338.80px;top:158.30px;font: 400 12.4px/20px 'Liberation Sans',sans-serif;color:#f0f0f0;letter-spacing:-0.669px">Cells</span>
<i class="ab" style="left:1424.0px;top:84px;width:1px;height:88px;background:#4d4d4d"></i>
<svg class="ab" style="left:1438.5px;top:87.5px" width="13" height="15" viewBox="0 0 13 15"><path d="M11.500 3.300V1H1.200L6.800 7.500 1.200 14H11.500V11.700" fill="none" stroke="#dcdcdc" stroke-width="1.300"/></svg>
<span class="t" style="left:1456.50px;top:85.00px;font: 400 12.4px/20px 'Liberation Sans',sans-serif;color:#f0f0f0;letter-spacing:-0.096px">AutoSum</span>
<svg class="ab" style="left:1523.90px;top:92.20px" width="7.2" height="4.6" viewBox="-1 -1 7.2 4.6"><path d="M0 0 L2.6 2.6 L5.2 0" fill="none" stroke="#dadada" stroke-width="1.6" stroke-linecap="round" stroke-linejoin="round"/></svg>
<svg class="ab" style="left:1437px;top:113px" width="16" height="15" viewBox="0 0 16 15"><rect x="0.600" y="0.600" width="14.800" height="13.500" fill="none" stroke="#dcdcdc" stroke-width="1.200"/><path d="M0.600 3.500H15.400" stroke="#dcdcdc" stroke-width="1"/><path d="M8 5.500V11.500M5.300 9L8 11.700 10.700 9" fill="none" stroke="#4ea6dc" stroke-width="1.300"/></svg>
<span class="t" style="left:1456.50px;top:110.80px;font: 400 12.4px/20px 'Liberation Sans',sans-serif;color:#f0f0f0;letter-spacing:0.043px">Fill</span>
<svg class="ab" style="left:1475.50px;top:118.75px" width="7" height="4.5" viewBox="-1 -1 7 4.5"><path d="M0 0 L2.5 2.5 L5 0" fill="none" stroke="#dadada" stroke-width="1.6" stroke-linecap="round" stroke-linejoin="round"/></svg>
<svg class="ab" style="left:1437px;top:139px" width="16" height="15" viewBox="0 0 16 15"><path d="M9.500 1L15 6.500 8 13.500H4.500L1 10z" fill="none" stroke="#c060d0" stroke-width="1.300"/><path d="M1.800 9.800L5.800 5.800l5 5L8 13.500H4.500z" fill="#c060d0"/></svg>
<span class="t" style="left:1456.50px;top:137.00px;font: 400 12.4px/20px 'Liberation Sans',sans-serif;color:#f0f0f0;letter-spacing:-0.362px">Clear</span>
<svg class="ab" style="left:1487.00px;top:145.25px" width="7" height="4.5" viewBox="-1 -1 7 4.5"><path d="M0 0 L2.5 2.5 L5 0" fill="none" stroke="#dadada" stroke-width="1.6" stroke-linecap="round" stroke-linejoin="round"/></svg>
<svg class="ab" style="left:1548px;top:87px" width="30" height="28" viewBox="0 0 30 28"><text x="1" y="11" font-family="Liberation Sans" font-size="13" fill="#4ea6dc">A</text><text x="1.500" y="26" font-family="Liberation Sans" font-size="13" fill="#dcdcdc">Z</text><path d="M13 7.500H28.500L22.800 14.500V20.500H18.800V14.500z" fill="none" stroke="#dcdcdc" stroke-width="1.300" stroke-linejoin="round"/></svg>
<span class="t" style="left:1545.30px;top:118.00px;font: 400 12.4px/20px 'Liberation Sans',sans-serif;color:#f0f0f0;letter-spacing:0.127px">Sort &amp;</span>
<span class="t" style="left:1543.80px;top:133.80px;font: 400 12.4px/20px 'Liberation Sans',sans-serif;color:#f0f0f0;letter-spacing:-0.558px">Filter</span>
<svg class="ab" style="left:1572.80px;top:141.75px" width="7" height="4.5" viewBox="-1 -1 7 4.5"><path d="M0 0 L2.5 2.5 L5 0" fill="none" stroke="#dadada" stroke-width="1.6" stroke-linecap="round" stroke-linejoin="round"/></svg>
<svg class="ab" style="left:1593px;top:86px" width="31" height="31" viewBox="0 0 31 31"><circle cx="19.500" cy="11.500" r="10" fill="none" stroke="#dcdcdc" stroke-width="1.300"/><path d="M12.500 18.500L1.500 29.500" stroke="#dcdcdc" stroke-width="1.500" stroke-linecap="round"/></svg>
<span class="t" style="left:1590.80px;top:118.00px;font: 400 12.4px/20px 'Liberation Sans',sans-serif;color:#f0f0f0;letter-spacing:0.115px">Find &amp;</span>
<span class="t" style="left:1587.50px;top:133.80px;font: 400 12.4px/20px 'Liberation Sans',sans-serif;color:#f0f0f0;letter-spacing:-0.356px">Select</span>
<svg class="ab" style="left:1622.00px;top:141.75px" width="7" height="4.5" viewBox="-1 -1 7 4.5"><path d="M0 0 L2.5 2.5 L5 0" fill="none" stroke="#dadada" stroke-width="1.6" stroke-linecap="round" stroke-linejoin="round"/></svg>
<span class="t" style="left:1513.80px;top:158.30px;font: 400 12.4px/20px 'Liberation Sans',sans-serif;color:#f0f0f0;letter-spacing:-0.056px">Editing</span>
<i class="ab" style="left:1639.5px;top:84px;width:1px;height:88px;background:#4d4d4d"></i>
<svg class="ab" style="left:1658px;top:86.5px" width="29" height="29" viewBox="0 0 29 29"><rect x="0.700" y="0.700" width="27" height="27" fill="none" stroke="#c8481e" stroke-width="1.400"/><rect x="3.500" y="3.500" width="9" height="9" fill="none" stroke="#c8481e" stroke-width="1.300"/><rect x="16" y="3.500" width="9" height="9" fill="none" stroke="#c8481e" stroke-width="1.300"/><rect x="3.500" y="16" width="9" height="9" fill="none" stroke="#c8481e" stroke-width="1.300"/><rect x="16" y="16" width="9" height="9" fill="none" stroke="#c8481e" stroke-width="1.300"/></svg>
<span class="t" style="left:1650.80px;top:118.00px;font: 400 12.4px/20px 'Liberation Sans',sans-serif;color:#f0f0f0;letter-spacing:0.098px">Add-ins</span>
<span class="t" style="left:1651.50px;top:158.30px;font: 400 12.4px/20px 'Liberation Sans',sans-serif;color:#f0f0f0;letter-spacing:-0.174px">Add-ins</span>
<i class="ab" style="left:1703.3px;top:84px;width:1px;height:88px;background:#4d4d4d"></i>
<svg class="ab" style="left:1748.5px;top:90px" width="25" height="26" viewBox="0 0 25 26"><path d="M1.200 1.200H10.500L15.500 6.200V10.500M8 19.500H1.200z" fill="none" stroke="#2b84e0" stroke-width="1.800" stroke-linejoin="round"/><path d="M1.200 1.200V19.500H8" fill="none" stroke="#2b84e0" stroke-width="1.800"/><path d="M11.500 16V24H22.500V16" fill="none" stroke="#2b84e0" stroke-width="1.800"/><path d="M17 20V9.500M13.500 13L17 9.500 20.500 13" fill="none" stroke="#2b84e0" stroke-width="1.800"/></svg>
<span class="t" style="left:1713.80px;top:118.00px;font: 400 12.4px/20px 'Liberation Sans',sans-serif;color:#f0f0f0;letter-spacing:-0.488px">Create and Share</span>
<span class="t" style="left:1728.80px;top:133.80px;font: 400 12.4px/20px 'Liberation Sans',sans-serif;color:#f0f0f0;letter-spacing:-0.451px">Adobe PDF</span>
<span class="t" style="left:1719.50px;top:158.30px;font: 400 12.4px/20px 'Liberation Sans',sans-serif;color:#f0f0f0;letter-spacing:-0.254px">Adobe Acrobat</span>
<i class="ab" style="left:1812.8px;top:84px;width:1px;height:88px;background:#4d4d4d"></i>
<svg class="ab" style="left:1892.00px;top:161.25px" width="11" height="6.5" viewBox="-1 -1 11 6.5"><path d="M0 0 L4.5 4.5 L9 0" fill="none" stroke="#dcdcdc" stroke-width="1.4" stroke-linecap="round" stroke-linejoin="round"/></svg>
</div>
<div id="formulabar">
<div class="ab" style="left:8px;top:186px;width:102px;height:26px;box-sizing:border-box;border:1px solid #625e5b;border-radius:5px;background:#292727"></div>
<span class="t" style="left:14.50px;top:189.50px;font: 400 12.6px/20px 'Liberation Sans',sans-serif;color:#f0f0f0;letter-spacing:0.395px">A137</span>
<svg class="ab" style="left:94.50px;top:197.25px" width="9" height="5.5" viewBox="-1 -1 9 5.5"><path d="M0 0 L3.5 3.5 L7 0" fill="none" stroke="#d0d0d0" stroke-width="1.6" stroke-linecap="round" stroke-linejoin="round"/></svg>
<i class="ab" style="left:119px;top:193.500px;width:2px;height:2px;background:#cfcfcf;box-shadow:0 4.500px 0 #cfcfcf,0 9px 0 #cfcfcf"></i>
<div class="ab" style="left:130px;top:186px;width:74px;height:26px;box-sizing:border-box;border:1px solid #625e5b;border-radius:5px;background:#292727"></div>
<svg class="ab" style="left:137px;top:193.5px" width="12" height="12" viewBox="0 0 12 12"><path d="M1 1L11 11M11 1L1 11" stroke="#5e5e5e" stroke-width="1.300"/></svg>
<svg class="ab" style="left:159px;top:193.5px" width="15" height="12" viewBox="0 0 15 12"><path d="M1 6.500L5.500 11 14 1" fill="none" stroke="#5e5e5e" stroke-width="1.300"/></svg>
<span class="t" style="left:184.50px;top:189.00px;font:italic 400 14.5px/20px 'Liberation Serif',serif;color:#e0e0e0;letter-spacing:2.016px">fx</span>
<div class="ab" style="left:208px;top:186px;width:1704px;height:66px;box-sizing:border-box;border:1px solid #625e5b;border-radius:5px;background:#292828"></div>
<span class="t" style="left:220.00px;top:189.50px;font: 400 12.4px/20px 'Liberation Sans',sans-serif;color:#f0f0f0;letter-spacing:0.220px">NIK TIDAK VALID</span>
<svg class="ab" style="left:1896px;top:192.5px" width="12" height="7" viewBox="0 0 12 7"><path d="M1 6L6 1l5 5" fill="none" stroke="#d8d8d8" stroke-width="1.300"/></svg>
</div>
<div id="grid">
<div class="sheet">
<i class="gv" style="left:134px;top:276px;height:174px"></i>
<i class="gv" style="left:198px;top:276px;height:174px"></i>
<i class="gv" style="left:418px;top:276px;height:174px"></i>
<i class="gv" style="left:482px;top:276px;height:174px"></i>
<i class="gv" style="left:546px;top:276px;height:174px"></i>
<i class="gv" style="left:610px;top:276px;height:174px"></i>
<i class="gv" style="left:741px;top:276px;height:174px"></i>
<i class="gv" style="left:805px;top:276px;height:174px"></i>
<i class="gv" style="left:993px;top:276px;height:174px"></i>
<i class="gv" style="left:1091px;top:276px;height:174px"></i>
<i class="gv" style="left:1188px;top:276px;height:174px"></i>
<i class="gv" style="left:1285px;top:276px;height:174px"></i>
<i class="gv" style="left:1428px;top:276px;height:174px"></i>
<i class="gv" style="left:1525px;top:276px;height:174px"></i>
<i class="gv" style="left:1622px;top:276px;height:174px"></i>
<i class="gv" style="left:1719px;top:276px;height:174px"></i>
<i class="gv" style="left:1857px;top:276px;height:174px"></i>
<i class="gv" style="left:134px;top:450px;height:528px"></i>
<i class="gh" style="left:25px;top:292px;width:1873px"></i>
<i class="gh" style="left:25px;top:309px;width:1873px"></i>
<i class="gh" style="left:25px;top:347px;width:1873px"></i>
<i class="gh" style="left:25px;top:385px;width:1873px"></i>
<i class="gh" style="left:25px;top:470px;width:174px"></i>
<i class="gh" style="left:25px;top:487px;width:174px"></i>
<i class="gh" style="left:25px;top:504px;width:174px"></i>
<i class="gh" style="left:25px;top:525px;width:174px"></i>
<i class="gh" style="left:25px;top:542px;width:174px"></i>
<i class="gh" style="left:25px;top:559px;width:174px"></i>
<i class="gh" style="left:25px;top:580px;width:174px"></i>
<i class="gh" style="left:25px;top:597px;width:174px"></i>
<i class="gh" style="left:25px;top:614px;width:174px"></i>
<i class="gh" style="left:25px;top:631px;width:174px"></i>
<i class="gh" style="left:25px;top:652px;width:174px"></i>
<i class="gh" style="left:25px;top:673px;width:174px"></i>
<i class="gh" style="left:25px;top:690px;width:174px"></i>
<i class="gh" style="left:25px;top:711px;width:174px"></i>
<i class="gh" style="left:25px;top:732px;width:174px"></i>
<i class="gh" style="left:25px;top:749px;width:174px"></i>
<i class="gh" style="left:25px;top:770px;width:174px"></i>
<i class="gh" style="left:25px;top:787px;width:174px"></i>
<i class="gh" style="left:25px;top:808px;width:174px"></i>
<i class="gh" style="left:25px;top:825px;width:174px"></i>
<i class="gh" style="left:25px;top:846px;width:174px"></i>
<i class="gh" style="left:25px;top:863px;width:174px"></i>
<i class="gh" style="left:25px;top:884px;width:174px"></i>
<i class="gh" style="left:25px;top:901px;width:174px"></i>
<i class="gh" style="left:25px;top:922px;width:174px"></i>
<i class="gh" style="left:25px;top:939px;width:174px"></i>
<i class="gh" style="left:25px;top:960px;width:174px"></i>
<i class="gh" style="left:25px;top:977px;width:174px"></i>
<div class="merge" style="left:870px;top:348px;width:849px;height:37px"><span class="c13" style="position:absolute;left:0;right:0;top:10px;text-align:center">FEB</span></div>
<span class="c13 num" style="position:absolute;left:870px;top:332px;width:117px;text-align:right">149.153.567,00</span>
<span class="c13 num" style="position:absolute;left:994px;top:332px;width:91px;text-align:right">1.500.000,00</span>
<span class="c13 num" style="position:absolute;left:1092px;top:332px;width:90px;text-align:right">2.958.631,10</span>
<span class="c13" style="position:absolute;left:1258px;top:332px;width:10px;text-align:center">-</span>
<span class="c13 num" style="position:absolute;left:1286px;top:332px;width:136px;text-align:right">153.612.198,10</span>
<span class="c13 num" style="position:absolute;left:1429px;top:332px;width:90px;text-align:right">0,01</span>
<span class="c13 num" style="position:absolute;left:1526px;top:332px;width:90px;text-align:right">87.864,00</span>
<span class="c13 num" style="position:absolute;left:1623px;top:332px;width:90px;text-align:right">5.154.152,10</span>
<span class="c13 num" style="position:absolute;left:1720px;top:332px;width:131px;text-align:right">92.170.064,52</span>
<span class="c13 num" style="position:absolute;left:1865.5px;top:332px">24.12</span>
<span class="c13" style="position:absolute;left:135px;top:434px;width:36px;text-align:right">1</span>
<i class="fb" style="left:182px;top:432px"><svg width="16" height="16" viewBox="0 0 16 16"><path d="M4.5 6.5h7L8 10z" fill="#5a5a5a"/></svg></i>
<div class="bx" style="left:198px;top:385px;width:221px;height:65px"></div>
<span class="c13" style="position:absolute;left:201px;top:434px">NAMA</span>
<i class="fb" style="left:402px;top:432px"><svg width="16" height="16" viewBox="0 0 16 16"><path d="M4.5 6.5h7L8 10z" fill="#5a5a5a"/></svg></i>
<div class="bx pink" style="left:418px;top:385px;width:65px;height:65px"><span class="ph">Awal kerj</span></div>
<i class="fb" style="left:466px;top:432px"><svg width="16" height="16" viewBox="0 0 16 16"><path d="M6.5 4h8l-3 3.5V12h-2V7.5z" fill="#5a5a5a"/><path d="M2.5 9.5h5L5 12z" fill="#5a5a5a"/></svg></i>
<div class="bx pink" style="left:482px;top:385px;width:65px;height:65px"><span class="ph">akhi kerja</span></div>
<i class="fb" style="left:530px;top:432px"><svg width="16" height="16" viewBox="0 0 16 16"><path d="M6.5 4h8l-3 3.5V12h-2V7.5z" fill="#5a5a5a"/><path d="M2.5 9.5h5L5 12z" fill="#5a5a5a"/></svg></i>
<div class="bx pink" style="left:546px;top:385px;width:65px;height:65px"><span class="ph">Bulan be</span></div>
<i class="fb" style="left:594px;top:432px"><svg width="16" height="16" viewBox="0 0 16 16"><path d="M4.5 6.5h7L8 10z" fill="#5a5a5a"/></svg></i>
<div class="bx pink" style="left:610px;top:385px;width:132px;height:65px"><span class="ph">NIK</span></div>
<i class="fb" style="left:725px;top:432px"><svg width="16" height="16" viewBox="0 0 16 16"><path d="M4.5 6.5h7L8 10z" fill="#5a5a5a"/></svg></i>
<div class="bx pink" style="left:741px;top:385px;width:65px;height:65px"><span class="ph">OS</span></div>
<i class="fb" style="left:789px;top:432px"><svg width="16" height="16" viewBox="0 0 16 16"><path d="M4.5 6.5h7L8 10z" fill="#5a5a5a"/></svg></i>
<div class="bx pink" style="left:805px;top:385px;width:65px;height:65px"><span class="ph">PTKP</span></div>
<i class="fb" style="left:853px;top:432px"><svg width="16" height="16" viewBox="0 0 16 16"><path d="M4.5 6.5h7L8 10z" fill="#5a5a5a"/></svg></i>
<div class="bx gray" style="left:869px;top:385px;width:125px;height:65px"><span class="gh2">Gaji Pokok</span></div>
<i class="fb" style="left:977px;top:432px"><svg width="16" height="16" viewBox="0 0 16 16"><path d="M4.5 6.5h7L8 10z" fill="#5a5a5a"/></svg></i>
<div class="bx gray" style="left:993px;top:385px;width:99px;height:65px"><span class="gh2">Total<br>Tunjangan</span></div>
<i class="fb" style="left:1075px;top:432px"><svg width="16" height="16" viewBox="0 0 16 16"><path d="M4.5 6.5h7L8 10z" fill="#5a5a5a"/></svg></i>
<div class="bx gray" style="left:1091px;top:385px;width:98px;height:65px"><span class="gh2">Premi<br>JKK, JKM, Kes</span></div>
<i class="fb" style="left:1172px;top:432px"><svg width="16" height="16" viewBox="0 0 16 16"><path d="M4.5 6.5h7L8 10z" fill="#5a5a5a"/></svg></i>
<div class="bx gray" style="left:1188px;top:385px;width:98px;height:65px"><span class="gh2">Tunjangan<br>PPh</span></div>
<i class="fb" style="left:1269px;top:432px"><svg width="16" height="16" viewBox="0 0 16 16"><path d="M4.5 6.5h7L8 10z" fill="#5a5a5a"/></svg></i>
<div class="bx gray" style="left:1285px;top:385px;width:144px;height:65px"><span class="gh2">Penghasilan<br>Bruto</span></div>
<i class="fb" style="left:1412px;top:432px"><svg width="16" height="16" viewBox="0 0 16 16"><path d="M4.5 6.5h7L8 10z" fill="#5a5a5a"/></svg></i>
<div class="bx gray" style="left:1428px;top:385px;width:98px;height:65px"><span class="gh2">Tarif<br>TER</span></div>
<i class="fb" style="left:1509px;top:432px"><svg width="16" height="16" viewBox="0 0 16 16"><path d="M4.5 6.5h7L8 10z" fill="#5a5a5a"/></svg></i>
<div class="bx gray" style="left:1525px;top:385px;width:98px;height:65px"><span class="gh2">PPh 21</span></div>
<i class="fb" style="left:1606px;top:432px"><svg width="16" height="16" viewBox="0 0 16 16"><path d="M4.5 6.5h7L8 10z" fill="#5a5a5a"/></svg></i>
<div class="bx gray" style="left:1622px;top:385px;width:98px;height:65px"><span class="gh2">Pengurang<br>JHT/JP</span></div>
<i class="fb" style="left:1703px;top:432px"><svg width="16" height="16" viewBox="0 0 16 16"><path d="M4.5 6.5h7L8 10z" fill="#5a5a5a"/></svg></i>
<div class="bx gray" style="left:1719px;top:385px;width:139px;height:65px"><span class="gh2">Gaji Pokok</span></div>
<i class="fb" style="left:1841px;top:432px"><svg width="16" height="16" viewBox="0 0 16 16"><path d="M4.5 6.5h7L8 10z" fill="#5a5a5a"/></svg></i>
<div class="bx gray" style="left:1857px;top:385px;width:98px;height:65px"><span class="gh2">Total<br>Tunjangan</span></div>
<span class="c15" style="position:absolute;left:135px;top:452px;width:63px;text-align:center">2</span>
<div class="bx" style="left:198px;top:449px;width:221px;height:22px"></div>
<span class="c13 nm" style="position:absolute;left:201px;top:454px">Sahlan Mubarok</span>
<div class="bx" style="left:418px;top:449px;width:65px;height:22px"></div>
<span class="c13" style="position:absolute;left:419px;top:454px;width:61px;text-align:right">1</span>
<div class="bx" style="left:482px;top:449px;width:65px;height:22px"></div>
<span class="c13" style="position:absolute;left:483px;top:454px;width:61px;text-align:right">12</span>
<div class="bx" style="left:546px;top:449px;width:65px;height:22px"></div>
<span class="c13" style="position:absolute;left:547px;top:454px;width:61px;text-align:right">12</span>
<div class="bx" style="left:610px;top:449px;width:132px;height:22px"></div>
<span class="c13 nik" style="position:absolute;left:613px;top:454px">3205052207000001</span>
<i class="tri" style="left:611px;top:450px"></i>
<div class="bx" style="left:741px;top:449px;width:65px;height:22px"></div>
<span class="c13" style="position:absolute;left:744px;top:454px">TMI</span>
<div class="bx" style="left:805px;top:449px;width:65px;height:22px"></div>
<span class="c13" style="position:absolute;left:808px;top:454px">TK/0</span>
<div class="bx" style="left:869px;top:449px;width:125px;height:22px"></div>
<span class="c13 num" style="position:absolute;left:870px;top:454px;width:117px;text-align:right">2.329.000,00</span>
<div class="bx" style="left:993px;top:449px;width:99px;height:22px"></div>
<span class="c13" style="position:absolute;left:1064px;top:454px;width:10px;text-align:center">-</span>
<div class="bx" style="left:1091px;top:449px;width:98px;height:22px"></div>
<span class="c13 num" style="position:absolute;left:1092px;top:454px;width:90px;text-align:right">105.716,40</span>
<div class="bx" style="left:1188px;top:449px;width:98px;height:22px"></div>
<span class="c13" style="position:absolute;left:1258px;top:454px;width:10px;text-align:center">-</span>
<div class="bx" style="left:1285px;top:449px;width:144px;height:22px"></div>
<span class="c13 num" style="position:absolute;left:1286px;top:454px;width:136px;text-align:right">2.434.716,40</span>
<div class="bx" style="left:1428px;top:449px;width:98px;height:22px"></div>
<span class="c13" style="position:absolute;left:1498px;top:454px;width:10px;text-align:center">-</span>
<div class="bx" style="left:1525px;top:449px;width:98px;height:22px"></div>
<span class="c13" style="position:absolute;left:1595px;top:454px;width:10px;text-align:center">-</span>
<div class="bx" style="left:1622px;top:449px;width:98px;height:22px"></div>
<span class="c13 num" style="position:absolute;left:1623px;top:454px;width:90px;text-align:right">69.856,65</span>
<div class="bx" style="left:1719px;top:449px;width:139px;height:22px"></div>
<span class="c13 num" style="position:absolute;left:1720px;top:454px;width:131px;text-align:right">2.329.000,00</span>
<div class="bx" style="left:1857px;top:449px;width:98px;height:22px"></div>

<span class="c13" style="position:absolute;left:135px;top:472px;width:63px;text-align:center">29</span>
<div class="bx" style="left:198px;top:470px;width:221px;height:18px"></div>
<span class="c13 nm" style="position:absolute;left:201px;top:472px">Bagas Anggara Saputra</span>
<div class="bx" style="left:418px;top:470px;width:65px;height:18px"></div>
<span class="c13" style="position:absolute;left:419px;top:472px;width:61px;text-align:right">1</span>
<div class="bx" style="left:482px;top:470px;width:65px;height:18px"></div>
<span class="c13" style="position:absolute;left:483px;top:472px;width:61px;text-align:right">12</span>
<div class="bx" style="left:546px;top:470px;width:65px;height:18px"></div>
<span class="c13" style="position:absolute;left:547px;top:472px;width:61px;text-align:right">12</span>
<div class="bx" style="left:610px;top:470px;width:132px;height:18px"></div>
<span class="c13 nik" style="position:absolute;left:613px;top:472px">1671033005010006</span>
<i class="tri" style="left:611px;top:471px"></i>
<div class="bx" style="left:741px;top:470px;width:65px;height:18px"></div>
<span class="c13" style="position:absolute;left:744px;top:472px">TMI</span>
<div class="bx" style="left:805px;top:470px;width:65px;height:18px"></div>
<span class="c13" style="position:absolute;left:808px;top:472px">TK/0</span>
<div class="bx" style="left:869px;top:470px;width:125px;height:18px"></div>
<span class="c13 num" style="position:absolute;left:870px;top:472px;width:117px;text-align:right">2.742.000,00</span>
<div class="bx" style="left:993px;top:470px;width:99px;height:18px"></div>
<span class="c13" style="position:absolute;left:1064px;top:472px;width:10px;text-align:center">-</span>
<div class="bx" style="left:1091px;top:470px;width:98px;height:18px"></div>
<span class="c13 num" style="position:absolute;left:1092px;top:472px;width:90px;text-align:right">21.149,83</span>
<div class="bx" style="left:1188px;top:470px;width:98px;height:18px"></div>
<span class="c13" style="position:absolute;left:1258px;top:472px;width:10px;text-align:center">-</span>
<div class="bx" style="left:1285px;top:470px;width:144px;height:18px"></div>
<span class="c13 num" style="position:absolute;left:1286px;top:472px;width:136px;text-align:right">2.763.149,83</span>
<div class="bx" style="left:1428px;top:470px;width:98px;height:18px"></div>
<span class="c13" style="position:absolute;left:1498px;top:472px;width:10px;text-align:center">-</span>
<div class="bx" style="left:1525px;top:470px;width:98px;height:18px"></div>
<span class="c13" style="position:absolute;left:1595px;top:472px;width:10px;text-align:center">-</span>
<div class="bx" style="left:1622px;top:470px;width:98px;height:18px"></div>
<span class="c13 num" style="position:absolute;left:1623px;top:472px;width:90px;text-align:right">117.499,05</span>
<div class="bx" style="left:1719px;top:470px;width:139px;height:18px"></div>
<span class="c13 num" style="position:absolute;left:1720px;top:472px;width:131px;text-align:right">3.917.000,00</span>
<div class="bx" style="left:1857px;top:470px;width:98px;height:18px"></div>

<span class="c13" style="position:absolute;left:135px;top:489px;width:63px;text-align:center">31</span>
<div class="bx" style="left:198px;top:487px;width:221px;height:18px"></div>
<span class="c13 nm" style="position:absolute;left:201px;top:489px">Raden Harry</span>
<div class="bx" style="left:418px;top:487px;width:65px;height:18px"></div>
<span class="c13" style="position:absolute;left:419px;top:489px;width:61px;text-align:right">1</span>
<div class="bx" style="left:482px;top:487px;width:65px;height:18px"></div>
<span class="c13" style="position:absolute;left:483px;top:489px;width:61px;text-align:right">12</span>
<div class="bx" style="left:546px;top:487px;width:65px;height:18px"></div>
<span class="c13" style="position:absolute;left:547px;top:489px;width:61px;text-align:right">12</span>
<div class="bx" style="left:610px;top:487px;width:132px;height:18px"></div>
<span class="c13 nik" style="position:absolute;left:613px;top:489px">1671062504830013</span>
<i class="tri" style="left:611px;top:488px"></i>
<div class="bx" style="left:741px;top:487px;width:65px;height:18px"></div>
<span class="c13" style="position:absolute;left:744px;top:489px">TMI</span>
<div class="bx" style="left:805px;top:487px;width:65px;height:18px"></div>
<span class="c13" style="position:absolute;left:808px;top:489px">K/3</span>
<div class="bx" style="left:869px;top:487px;width:125px;height:18px"></div>
<span class="c13 num" style="position:absolute;left:870px;top:489px;width:117px;text-align:right">2.742.000,00</span>
<div class="bx" style="left:993px;top:487px;width:99px;height:18px"></div>
<span class="c13" style="position:absolute;left:1064px;top:489px;width:10px;text-align:center">-</span>
<div class="bx" style="left:1091px;top:487px;width:98px;height:18px"></div>
<span class="c13 num" style="position:absolute;left:1092px;top:489px;width:90px;text-align:right">21.149,83</span>
<div class="bx" style="left:1188px;top:487px;width:98px;height:18px"></div>
<span class="c13" style="position:absolute;left:1258px;top:489px;width:10px;text-align:center">-</span>
<div class="bx" style="left:1285px;top:487px;width:144px;height:18px"></div>
<span class="c13 num" style="position:absolute;left:1286px;top:489px;width:136px;text-align:right">2.763.149,83</span>
<div class="bx" style="left:1428px;top:487px;width:98px;height:18px"></div>
<span class="c13" style="position:absolute;left:1498px;top:489px;width:10px;text-align:center">-</span>
<div class="bx" style="left:1525px;top:487px;width:98px;height:18px"></div>
<span class="c13" style="position:absolute;left:1595px;top:489px;width:10px;text-align:center">-</span>
<div class="bx" style="left:1622px;top:487px;width:98px;height:18px"></div>
<span class="c13 num" style="position:absolute;left:1623px;top:489px;width:90px;text-align:right">117.499,05</span>
<div class="bx" style="left:1719px;top:487px;width:139px;height:18px"></div>
<span class="c13 num" style="position:absolute;left:1720px;top:489px;width:131px;text-align:right">2.742.000,00</span>
<div class="bx" style="left:1857px;top:487px;width:98px;height:18px"></div>
<span class="c13 num" style="position:absolute;left:1872.5px;top:489px">2.45</span>
<span class="c15" style="position:absolute;left:135px;top:507px;width:63px;text-align:center">32</span>
<div class="bx" style="left:198px;top:504px;width:221px;height:22px"></div>
<span class="c13 nm" style="position:absolute;left:201px;top:509px">R.M. Rocky Ariansyah</span>
<div class="bx" style="left:418px;top:504px;width:65px;height:22px"></div>
<span class="c13" style="position:absolute;left:419px;top:509px;width:61px;text-align:right">1</span>
<div class="bx" style="left:482px;top:504px;width:65px;height:22px"></div>
<span class="c13" style="position:absolute;left:483px;top:509px;width:61px;text-align:right">12</span>
<div class="bx" style="left:546px;top:504px;width:65px;height:22px"></div>
<span class="c13" style="position:absolute;left:547px;top:509px;width:61px;text-align:right">12</span>
<div class="bx" style="left:610px;top:504px;width:132px;height:22px"></div>
<span class="c13 nik" style="position:absolute;left:613px;top:509px">1671112310800002</span>
<i class="tri" style="left:611px;top:505px"></i>
<div class="bx" style="left:741px;top:504px;width:65px;height:22px"></div>
<span class="c13" style="position:absolute;left:744px;top:509px">TMI</span>
<div class="bx" style="left:805px;top:504px;width:65px;height:22px"></div>
<span class="c13" style="position:absolute;left:808px;top:509px">K/3</span>
<div class="bx" style="left:869px;top:504px;width:125px;height:22px"></div>
<span class="c13 num" style="position:absolute;left:870px;top:509px;width:117px;text-align:right">2.742.000,00</span>
<div class="bx" style="left:993px;top:504px;width:99px;height:22px"></div>
<span class="c13" style="position:absolute;left:1064px;top:509px;width:10px;text-align:center">-</span>
<div class="bx" style="left:1091px;top:504px;width:98px;height:22px"></div>
<span class="c13 num" style="position:absolute;left:1092px;top:509px;width:90px;text-align:right">21.149,83</span>
<div class="bx" style="left:1188px;top:504px;width:98px;height:22px"></div>
<span class="c13" style="position:absolute;left:1258px;top:509px;width:10px;text-align:center">-</span>
<div class="bx" style="left:1285px;top:504px;width:144px;height:22px"></div>
<span class="c13 num" style="position:absolute;left:1286px;top:509px;width:136px;text-align:right">2.763.149,83</span>
<div class="bx" style="left:1428px;top:504px;width:98px;height:22px"></div>
<span class="c13" style="position:absolute;left:1498px;top:509px;width:10px;text-align:center">-</span>
<div class="bx" style="left:1525px;top:504px;width:98px;height:22px"></div>
<span class="c13" style="position:absolute;left:1595px;top:509px;width:10px;text-align:center">-</span>
<div class="bx" style="left:1622px;top:504px;width:98px;height:22px"></div>
<span class="c13 num" style="position:absolute;left:1623px;top:509px;width:90px;text-align:right">117.499,05</span>
<div class="bx" style="left:1719px;top:504px;width:139px;height:22px"></div>
<span class="c13 num" style="position:absolute;left:1720px;top:509px;width:131px;text-align:right">2.742.000,00</span>
<div class="bx" style="left:1857px;top:504px;width:98px;height:22px"></div>
<span class="c13 num" style="position:absolute;left:1872.5px;top:509px">3.17</span>
<span class="c13" style="position:absolute;left:135px;top:527px;width:63px;text-align:center">33</span>
<div class="bx" style="left:198px;top:525px;width:221px;height:18px"></div>
<span class="c13 nm" style="position:absolute;left:201px;top:527px">Rezky Alfindo</span>
<div class="bx" style="left:418px;top:525px;width:65px;height:18px"></div>
<span class="c13" style="position:absolute;left:419px;top:527px;width:61px;text-align:right">1</span>
<div class="bx" style="left:482px;top:525px;width:65px;height:18px"></div>
<span class="c13" style="position:absolute;left:483px;top:527px;width:61px;text-align:right">12</span>
<div class="bx" style="left:546px;top:525px;width:65px;height:18px"></div>
<span class="c13" style="position:absolute;left:547px;top:527px;width:61px;text-align:right">12</span>
<div class="bx" style="left:610px;top:525px;width:132px;height:18px"></div>
<span class="c13 nik" style="position:absolute;left:613px;top:527px">1671041505990007</span>
<i class="tri" style="left:611px;top:526px"></i>
<div class="bx" style="left:741px;top:525px;width:65px;height:18px"></div>
<span class="c13" style="position:absolute;left:744px;top:527px">TMI</span>
<div class="bx" style="left:805px;top:525px;width:65px;height:18px"></div>
<span class="c13" style="position:absolute;left:808px;top:527px">TK/0</span>
<div class="bx" style="left:869px;top:525px;width:125px;height:18px"></div>
<span class="c13 num" style="position:absolute;left:870px;top:527px;width:117px;text-align:right">2.742.000,00</span>
<div class="bx" style="left:993px;top:525px;width:99px;height:18px"></div>
<span class="c13" style="position:absolute;left:1064px;top:527px;width:10px;text-align:center">-</span>
<div class="bx" style="left:1091px;top:525px;width:98px;height:18px"></div>
<span class="c13 num" style="position:absolute;left:1092px;top:527px;width:90px;text-align:right">21.149,83</span>
<div class="bx" style="left:1188px;top:525px;width:98px;height:18px"></div>
<span class="c13" style="position:absolute;left:1258px;top:527px;width:10px;text-align:center">-</span>
<div class="bx" style="left:1285px;top:525px;width:144px;height:18px"></div>
<span class="c13 num" style="position:absolute;left:1286px;top:527px;width:136px;text-align:right">2.763.149,83</span>
<div class="bx" style="left:1428px;top:525px;width:98px;height:18px"></div>
<span class="c13" style="position:absolute;left:1498px;top:527px;width:10px;text-align:center">-</span>
<div class="bx" style="left:1525px;top:525px;width:98px;height:18px"></div>
<span class="c13" style="position:absolute;left:1595px;top:527px;width:10px;text-align:center">-</span>
<div class="bx" style="left:1622px;top:525px;width:98px;height:18px"></div>
<span class="c13 num" style="position:absolute;left:1623px;top:527px;width:90px;text-align:right">117.499,05</span>
<div class="bx" style="left:1719px;top:525px;width:139px;height:18px"></div>
<span class="c13 num" style="position:absolute;left:1720px;top:527px;width:131px;text-align:right">3.917.000,00</span>
<div class="bx" style="left:1857px;top:525px;width:98px;height:18px"></div>
<span class="c13 num" style="position:absolute;left:1872.5px;top:527px">1.72</span>
<span class="c13" style="position:absolute;left:135px;top:544px;width:63px;text-align:center">43</span>
<div class="bx" style="left:198px;top:542px;width:221px;height:18px"></div>
<span class="c13 nm" style="position:absolute;left:201px;top:544px">Dian Candra</span>
<div class="bx" style="left:418px;top:542px;width:65px;height:18px"></div>
<span class="c13" style="position:absolute;left:419px;top:544px;width:61px;text-align:right">1</span>
<div class="bx" style="left:482px;top:542px;width:65px;height:18px"></div>
<span class="c13" style="position:absolute;left:483px;top:544px;width:61px;text-align:right">12</span>
<div class="bx" style="left:546px;top:542px;width:65px;height:18px"></div>
<span class="c13" style="position:absolute;left:547px;top:544px;width:61px;text-align:right">12</span>
<div class="bx" style="left:610px;top:542px;width:132px;height:18px"></div>
<span class="c13 nik" style="position:absolute;left:613px;top:544px">3201102805850006</span>
<i class="tri" style="left:611px;top:543px"></i>
<div class="bx" style="left:741px;top:542px;width:65px;height:18px"></div>
<span class="c13" style="position:absolute;left:744px;top:544px">TMI</span>
<div class="bx" style="left:805px;top:542px;width:65px;height:18px"></div>
<span class="c13" style="position:absolute;left:808px;top:544px">K/1</span>
<div class="bx" style="left:869px;top:542px;width:125px;height:18px"></div>
<span class="c13 num" style="position:absolute;left:870px;top:544px;width:117px;text-align:right">5.127.000,00</span>
<div class="bx" style="left:993px;top:542px;width:99px;height:18px"></div>
<span class="c13" style="position:absolute;left:1064px;top:544px;width:10px;text-align:center">-</span>
<div class="bx" style="left:1091px;top:542px;width:98px;height:18px"></div>
<span class="c13 num" style="position:absolute;left:1092px;top:544px;width:90px;text-align:right">27.685,24</span>
<div class="bx" style="left:1188px;top:542px;width:98px;height:18px"></div>
<span class="c13" style="position:absolute;left:1258px;top:544px;width:10px;text-align:center">-</span>
<div class="bx" style="left:1285px;top:542px;width:144px;height:18px"></div>
<span class="c13 num" style="position:absolute;left:1286px;top:544px;width:136px;text-align:right">5.154.685,24</span>
<div class="bx" style="left:1428px;top:542px;width:98px;height:18px"></div>
<span class="c13" style="position:absolute;left:1498px;top:544px;width:10px;text-align:center">-</span>
<div class="bx" style="left:1525px;top:542px;width:98px;height:18px"></div>

<div class="bx" style="left:1622px;top:542px;width:98px;height:18px"></div>
<span class="c13 num" style="position:absolute;left:1623px;top:544px;width:90px;text-align:right">153.806,91</span>
<div class="bx" style="left:1719px;top:542px;width:139px;height:18px"></div>
<span class="c13 num" style="position:absolute;left:1720px;top:544px;width:131px;text-align:right">5.127.000,00</span>
<div class="bx" style="left:1857px;top:542px;width:98px;height:18px"></div>
<span class="c13 num" style="position:absolute;left:1872.5px;top:544px">1.10</span>
<span class="c15" style="position:absolute;left:135px;top:562px;width:63px;text-align:center">50</span>
<div class="bx" style="left:198px;top:559px;width:221px;height:22px"></div>
<span class="c13 nm" style="position:absolute;left:201px;top:564px">Songko Budi Prasetyo</span>
<div class="bx" style="left:418px;top:559px;width:65px;height:22px"></div>
<span class="c13" style="position:absolute;left:419px;top:564px;width:61px;text-align:right">1</span>
<div class="bx" style="left:482px;top:559px;width:65px;height:22px"></div>
<span class="c13" style="position:absolute;left:483px;top:564px;width:61px;text-align:right">12</span>
<div class="bx" style="left:546px;top:559px;width:65px;height:22px"></div>
<span class="c13" style="position:absolute;left:547px;top:564px;width:61px;text-align:right">12</span>
<div class="bx" style="left:610px;top:559px;width:132px;height:22px"></div>
<span class="c13 nik" style="position:absolute;left:613px;top:564px">3174022805830002</span>
<i class="tri" style="left:611px;top:560px"></i>
<div class="bx" style="left:741px;top:559px;width:65px;height:22px"></div>
<span class="c13" style="position:absolute;left:744px;top:564px">TMI</span>
<div class="bx" style="left:805px;top:559px;width:65px;height:22px"></div>
<span class="c13" style="position:absolute;left:808px;top:564px">K/2</span>
<div class="bx" style="left:869px;top:559px;width:125px;height:22px"></div>
<span class="c13 num" style="position:absolute;left:870px;top:564px;width:117px;text-align:right">3.778.000,00</span>
<div class="bx" style="left:993px;top:559px;width:99px;height:22px"></div>
<span class="c13" style="position:absolute;left:1064px;top:564px;width:10px;text-align:center">-</span>
<div class="bx" style="left:1091px;top:559px;width:98px;height:22px"></div>
<span class="c13 num" style="position:absolute;left:1092px;top:564px;width:90px;text-align:right">29.142,51</span>
<div class="bx" style="left:1188px;top:559px;width:98px;height:22px"></div>
<span class="c13" style="position:absolute;left:1258px;top:564px;width:10px;text-align:center">-</span>
<div class="bx" style="left:1285px;top:559px;width:144px;height:22px"></div>
<span class="c13 num" style="position:absolute;left:1286px;top:564px;width:136px;text-align:right">3.807.142,51</span>
<div class="bx" style="left:1428px;top:559px;width:98px;height:22px"></div>
<span class="c13" style="position:absolute;left:1498px;top:564px;width:10px;text-align:center">-</span>
<div class="bx" style="left:1525px;top:559px;width:98px;height:22px"></div>
<span class="c13" style="position:absolute;left:1595px;top:564px;width:10px;text-align:center">-</span>
<div class="bx" style="left:1622px;top:559px;width:98px;height:22px"></div>
<span class="c13 num" style="position:absolute;left:1623px;top:564px;width:90px;text-align:right">161.902,83</span>
<div class="bx" style="left:1719px;top:559px;width:139px;height:22px"></div>
<span class="c13 num" style="position:absolute;left:1720px;top:564px;width:131px;text-align:right">5.397.000,00</span>
<div class="bx" style="left:1857px;top:559px;width:98px;height:22px"></div>

<span class="c13" style="position:absolute;left:135px;top:582px;width:63px;text-align:center">65</span>
<div class="bx" style="left:198px;top:580px;width:221px;height:18px"></div>
<span class="c13 nm" style="position:absolute;left:201px;top:582px">Ezufatrin</span>
<div class="bx" style="left:418px;top:580px;width:65px;height:18px"></div>
<span class="c13" style="position:absolute;left:419px;top:582px;width:61px;text-align:right">1</span>
<div class="bx" style="left:482px;top:580px;width:65px;height:18px"></div>
<span class="c13" style="position:absolute;left:483px;top:582px;width:61px;text-align:right">7</span>
<div class="bx" style="left:546px;top:580px;width:65px;height:18px"></div>
<span class="c13" style="position:absolute;left:547px;top:582px;width:61px;text-align:right">7</span>
<div class="bx" style="left:610px;top:580px;width:132px;height:18px"></div>
<span class="c13 nik" style="position:absolute;left:613px;top:582px">1606021703900001</span>
<i class="tri" style="left:611px;top:581px"></i>
<div class="bx" style="left:741px;top:580px;width:65px;height:18px"></div>
<span class="c13" style="position:absolute;left:744px;top:582px">TMI</span>
<div class="bx" style="left:805px;top:580px;width:65px;height:18px"></div>
<span class="c13" style="position:absolute;left:808px;top:582px">K/2</span>
<i class="tri" style="left:806px;top:581px"></i>
<div class="bx" style="left:869px;top:580px;width:125px;height:18px"></div>
<span class="c13 num" style="position:absolute;left:870px;top:582px;width:117px;text-align:right">2.742.000,00</span>
<div class="bx" style="left:993px;top:580px;width:99px;height:18px"></div>
<span class="c13" style="position:absolute;left:1064px;top:582px;width:10px;text-align:center">-</span>
<div class="bx" style="left:1091px;top:580px;width:98px;height:18px"></div>
<span class="c13 num" style="position:absolute;left:1092px;top:582px;width:90px;text-align:right">21.149,83</span>
<div class="bx" style="left:1188px;top:580px;width:98px;height:18px"></div>
<span class="c13" style="position:absolute;left:1258px;top:582px;width:10px;text-align:center">-</span>
<div class="bx" style="left:1285px;top:580px;width:144px;height:18px"></div>
<span class="c13 num" style="position:absolute;left:1286px;top:582px;width:136px;text-align:right">2.763.149,83</span>
<div class="bx" style="left:1428px;top:580px;width:98px;height:18px"></div>
<span class="c13" style="position:absolute;left:1498px;top:582px;width:10px;text-align:center">-</span>
<div class="bx" style="left:1525px;top:580px;width:98px;height:18px"></div>
<span class="c13" style="position:absolute;left:1595px;top:582px;width:10px;text-align:center">-</span>
<div class="bx" style="left:1622px;top:580px;width:98px;height:18px"></div>
<span class="c13 num" style="position:absolute;left:1623px;top:582px;width:90px;text-align:right">117.499,05</span>
<div class="bx" style="left:1719px;top:580px;width:139px;height:18px"></div>
<span class="c13 num" style="position:absolute;left:1720px;top:582px;width:131px;text-align:right">2.742.000,00</span>
<div class="bx" style="left:1857px;top:580px;width:98px;height:18px"></div>
<span class="c13 num" style="position:absolute;left:1872.5px;top:582px">1.77</span>
<span class="c13" style="position:absolute;left:135px;top:599px;width:63px;text-align:center">83</span>
<div class="bx" style="left:198px;top:597px;width:221px;height:18px"></div>
<span class="c13 nm" style="position:absolute;left:201px;top:599px">Muhammad Reza Saputra</span>
<div class="bx" style="left:418px;top:597px;width:65px;height:18px"></div>
<span class="c13" style="position:absolute;left:419px;top:599px;width:61px;text-align:right">1</span>
<div class="bx" style="left:482px;top:597px;width:65px;height:18px"></div>
<span class="c13" style="position:absolute;left:483px;top:599px;width:61px;text-align:right">11</span>
<div class="bx" style="left:546px;top:597px;width:65px;height:18px"></div>
<span class="c13" style="position:absolute;left:547px;top:599px;width:61px;text-align:right">11</span>
<div class="bx" style="left:610px;top:597px;width:132px;height:18px"></div>
<span class="c13 nik" style="position:absolute;left:613px;top:599px">1671072605030004</span>
<i class="tri" style="left:611px;top:598px"></i>
<div class="bx" style="left:741px;top:597px;width:65px;height:18px"></div>
<span class="c13" style="position:absolute;left:744px;top:599px">TMI</span>
<div class="bx" style="left:805px;top:597px;width:65px;height:18px"></div>
<span class="c13" style="position:absolute;left:808px;top:599px">TK/0</span>
<div class="bx" style="left:869px;top:597px;width:125px;height:18px"></div>
<span class="c13 num" style="position:absolute;left:870px;top:599px;width:117px;text-align:right">2.742.000,00</span>
<div class="bx" style="left:993px;top:597px;width:99px;height:18px"></div>
<span class="c13" style="position:absolute;left:1064px;top:599px;width:10px;text-align:center">-</span>
<div class="bx" style="left:1091px;top:597px;width:98px;height:18px"></div>
<span class="c13 num" style="position:absolute;left:1092px;top:599px;width:90px;text-align:right">21.149,83</span>
<div class="bx" style="left:1188px;top:597px;width:98px;height:18px"></div>
<span class="c13" style="position:absolute;left:1258px;top:599px;width:10px;text-align:center">-</span>
<div class="bx" style="left:1285px;top:597px;width:144px;height:18px"></div>
<span class="c13 num" style="position:absolute;left:1286px;top:599px;width:136px;text-align:right">2.763.149,83</span>
<div class="bx" style="left:1428px;top:597px;width:98px;height:18px"></div>
<span class="c13" style="position:absolute;left:1498px;top:599px;width:10px;text-align:center">-</span>
<div class="bx" style="left:1525px;top:597px;width:98px;height:18px"></div>
<span class="c13" style="position:absolute;left:1595px;top:599px;width:10px;text-align:center">-</span>
<div class="bx" style="left:1622px;top:597px;width:98px;height:18px"></div>
<span class="c13 num" style="position:absolute;left:1623px;top:599px;width:90px;text-align:right">117.499,05</span>
<div class="bx" style="left:1719px;top:597px;width:139px;height:18px"></div>
<span class="c13 num" style="position:absolute;left:1720px;top:599px;width:131px;text-align:right">3.917.000,00</span>
<div class="bx" style="left:1857px;top:597px;width:98px;height:18px"></div>
<span class="c13 num" style="position:absolute;left:1884.5px;top:599px">75</span>
<span class="c13" style="position:absolute;left:135px;top:616px;width:63px;text-align:center">89</span>
<div class="bx" style="left:198px;top:614px;width:221px;height:18px"></div>
<span class="c13 nm" style="position:absolute;left:201px;top:616px">Iqbal Fajar Ramadhan</span>
<div class="bx" style="left:418px;top:614px;width:65px;height:18px"></div>
<span class="c13" style="position:absolute;left:419px;top:616px;width:61px;text-align:right">2</span>
<div class="bx" style="left:482px;top:614px;width:65px;height:18px"></div>
<span class="c13" style="position:absolute;left:483px;top:616px;width:61px;text-align:right">11</span>
<div class="bx" style="left:546px;top:614px;width:65px;height:18px"></div>
<span class="c13" style="position:absolute;left:547px;top:616px;width:61px;text-align:right">10</span>
<div class="bx" style="left:610px;top:614px;width:132px;height:18px"></div>
<span class="c13 nik" style="position:absolute;left:613px;top:616px">1871060602960007</span>
<i class="tri" style="left:611px;top:615px"></i>
<div class="bx" style="left:741px;top:614px;width:65px;height:18px"></div>
<span class="c13" style="position:absolute;left:744px;top:616px">TMI</span>
<div class="bx" style="left:805px;top:614px;width:65px;height:18px"></div>
<span class="c13" style="position:absolute;left:808px;top:616px">K/0</span>
<div class="bx" style="left:869px;top:614px;width:125px;height:18px"></div>
<span class="c13 num" style="position:absolute;left:870px;top:616px;width:117px;text-align:right">3.432.000,00</span>
<div class="bx" style="left:993px;top:614px;width:99px;height:18px"></div>
<span class="c13" style="position:absolute;left:1064px;top:616px;width:10px;text-align:center">-</span>
<div class="bx" style="left:1091px;top:614px;width:98px;height:18px"></div>
<span class="c13 num" style="position:absolute;left:1092px;top:616px;width:90px;text-align:right">26.466,03</span>
<div class="bx" style="left:1188px;top:614px;width:98px;height:18px"></div>
<span class="c13" style="position:absolute;left:1258px;top:616px;width:10px;text-align:center">-</span>
<div class="bx" style="left:1285px;top:614px;width:144px;height:18px"></div>
<span class="c13 num" style="position:absolute;left:1286px;top:616px;width:136px;text-align:right">3.458.466,03</span>
<div class="bx" style="left:1428px;top:614px;width:98px;height:18px"></div>
<span class="c13" style="position:absolute;left:1498px;top:616px;width:10px;text-align:center">-</span>
<div class="bx" style="left:1525px;top:614px;width:98px;height:18px"></div>
<span class="c13" style="position:absolute;left:1595px;top:616px;width:10px;text-align:center">-</span>
<div class="bx" style="left:1622px;top:614px;width:98px;height:18px"></div>
<span class="c13 num" style="position:absolute;left:1623px;top:616px;width:90px;text-align:right">147.033,51</span>
<div class="bx" style="left:1719px;top:614px;width:139px;height:18px"></div>
<span class="c13 num" style="position:absolute;left:1720px;top:616px;width:131px;text-align:right">3.432.000,00</span>
<div class="bx" style="left:1857px;top:614px;width:98px;height:18px"></div>

<span class="c15" style="position:absolute;left:135px;top:634px;width:63px;text-align:center">92</span>
<div class="bx" style="left:198px;top:631px;width:221px;height:22px"></div>
<span class="c13 nm" style="position:absolute;left:201px;top:636px">Aris Kuncoro</span>
<div class="bx" style="left:418px;top:631px;width:65px;height:22px"></div>
<span class="c13" style="position:absolute;left:419px;top:636px;width:61px;text-align:right">1</span>
<div class="bx" style="left:482px;top:631px;width:65px;height:22px"></div>
<span class="c13" style="position:absolute;left:483px;top:636px;width:61px;text-align:right">11</span>
<div class="bx" style="left:546px;top:631px;width:65px;height:22px"></div>
<span class="c13" style="position:absolute;left:547px;top:636px;width:61px;text-align:right">11</span>
<div class="bx" style="left:610px;top:631px;width:132px;height:22px"></div>
<span class="c13 nik" style="position:absolute;left:613px;top:636px">1607051101870001</span>
<i class="tri" style="left:611px;top:632px"></i>
<div class="bx" style="left:741px;top:631px;width:65px;height:22px"></div>
<span class="c13" style="position:absolute;left:744px;top:636px">TMI</span>
<div class="bx" style="left:805px;top:631px;width:65px;height:22px"></div>
<span class="c13" style="position:absolute;left:808px;top:636px">K/2</span>
<div class="bx" style="left:869px;top:631px;width:125px;height:22px"></div>
<span class="c13 num" style="position:absolute;left:870px;top:636px;width:117px;text-align:right">3.917.000,00</span>
<div class="bx" style="left:993px;top:631px;width:99px;height:22px"></div>
<span class="c13" style="position:absolute;left:1064px;top:636px;width:10px;text-align:center">-</span>
<div class="bx" style="left:1091px;top:631px;width:98px;height:22px"></div>
<span class="c13 num" style="position:absolute;left:1092px;top:636px;width:90px;text-align:right">21.149,83</span>
<div class="bx" style="left:1188px;top:631px;width:98px;height:22px"></div>
<span class="c13" style="position:absolute;left:1258px;top:636px;width:10px;text-align:center">-</span>
<div class="bx" style="left:1285px;top:631px;width:144px;height:22px"></div>
<span class="c13 num" style="position:absolute;left:1286px;top:636px;width:136px;text-align:right">3.938.149,83</span>
<div class="bx" style="left:1428px;top:631px;width:98px;height:22px"></div>
<span class="c13" style="position:absolute;left:1498px;top:636px;width:10px;text-align:center">-</span>
<div class="bx" style="left:1525px;top:631px;width:98px;height:22px"></div>
<span class="c13" style="position:absolute;left:1595px;top:636px;width:10px;text-align:center">-</span>
<div class="bx" style="left:1622px;top:631px;width:98px;height:22px"></div>
<span class="c13 num" style="position:absolute;left:1623px;top:636px;width:90px;text-align:right">117.499,05</span>
<div class="bx" style="left:1719px;top:631px;width:139px;height:22px"></div>
<span class="c13 num" style="position:absolute;left:1720px;top:636px;width:131px;text-align:right">3.917.000,00</span>
<div class="bx" style="left:1857px;top:631px;width:98px;height:22px"></div>
<span class="c13 num" style="position:absolute;left:1872.5px;top:636px">1.37</span>
<span class="c15" style="position:absolute;left:135px;top:655px;width:63px;text-align:center">94</span>
<div class="bx" style="left:198px;top:652px;width:221px;height:22px"></div>
<span class="c13 nm" style="position:absolute;left:201px;top:657px">Dian Pranita Sari</span>
<div class="bx" style="left:418px;top:652px;width:65px;height:22px"></div>
<span class="c13" style="position:absolute;left:419px;top:657px;width:61px;text-align:right">1</span>
<div class="bx" style="left:482px;top:652px;width:65px;height:22px"></div>
<span class="c13" style="position:absolute;left:483px;top:657px;width:61px;text-align:right">3</span>
<div class="bx" style="left:546px;top:652px;width:65px;height:22px"></div>
<span class="c13" style="position:absolute;left:547px;top:657px;width:61px;text-align:right">3</span>
<div class="bx" style="left:610px;top:652px;width:132px;height:22px"></div>
<span class="c13 nik" style="position:absolute;left:613px;top:657px">3603174405910003</span>
<i class="tri" style="left:611px;top:653px"></i>
<div class="bx" style="left:741px;top:652px;width:65px;height:22px"></div>
<span class="c13" style="position:absolute;left:744px;top:657px">TMI</span>
<div class="bx" style="left:805px;top:652px;width:65px;height:22px"></div>
<span class="c13" style="position:absolute;left:808px;top:657px">TK/0</span>
<div class="bx" style="left:869px;top:652px;width:125px;height:22px"></div>
<span class="c13 num" style="position:absolute;left:870px;top:657px;width:117px;text-align:right">5.196.000,00</span>
<div class="bx" style="left:993px;top:652px;width:99px;height:22px"></div>
<span class="c13" style="position:absolute;left:1064px;top:657px;width:10px;text-align:center">-</span>
<div class="bx" style="left:1091px;top:652px;width:98px;height:22px"></div>
<span class="c13 num" style="position:absolute;left:1092px;top:657px;width:90px;text-align:right">28.056,89</span>
<div class="bx" style="left:1188px;top:652px;width:98px;height:22px"></div>
<span class="c13" style="position:absolute;left:1258px;top:657px;width:10px;text-align:center">-</span>
<div class="bx" style="left:1285px;top:652px;width:144px;height:22px"></div>
<span class="c13 num" style="position:absolute;left:1286px;top:657px;width:136px;text-align:right">5.224.056,89</span>
<div class="bx" style="left:1428px;top:652px;width:98px;height:22px"></div>
<span class="c13" style="position:absolute;left:1498px;top:657px;width:10px;text-align:center">-</span>
<div class="bx" style="left:1525px;top:652px;width:98px;height:22px"></div>
<span class="c13" style="position:absolute;left:1595px;top:657px;width:10px;text-align:center">-</span>
<div class="bx" style="left:1622px;top:652px;width:98px;height:22px"></div>
<span class="c13 num" style="position:absolute;left:1623px;top:657px;width:90px;text-align:right">155.871,63</span>
<div class="bx" style="left:1719px;top:652px;width:139px;height:22px"></div>
<span class="c13 num" style="position:absolute;left:1720px;top:657px;width:131px;text-align:right">2.681.806,45</span>
<div class="bx" style="left:1857px;top:652px;width:98px;height:22px"></div>

<span class="c13" style="position:absolute;left:135px;top:675px;width:63px;text-align:center">95</span>
<div class="bx" style="left:198px;top:673px;width:221px;height:18px"></div>
<span class="c13 nm" style="position:absolute;left:201px;top:675px">Rival Ferdian</span>
<div class="bx" style="left:418px;top:673px;width:65px;height:18px"></div>
<span class="c13" style="position:absolute;left:419px;top:675px;width:61px;text-align:right">1</span>
<div class="bx" style="left:482px;top:673px;width:65px;height:18px"></div>
<span class="c13" style="position:absolute;left:483px;top:675px;width:61px;text-align:right">3</span>
<div class="bx" style="left:546px;top:673px;width:65px;height:18px"></div>
<span class="c13" style="position:absolute;left:547px;top:675px;width:61px;text-align:right">3</span>
<div class="bx" style="left:610px;top:673px;width:132px;height:18px"></div>
<span class="c13 nik" style="position:absolute;left:613px;top:675px">3276031207940001</span>
<i class="tri" style="left:611px;top:674px"></i>
<div class="bx" style="left:741px;top:673px;width:65px;height:18px"></div>
<span class="c13" style="position:absolute;left:744px;top:675px">TMI</span>
<div class="bx" style="left:805px;top:673px;width:65px;height:18px"></div>
<span class="c13" style="position:absolute;left:808px;top:675px">K/1</span>
<div class="bx" style="left:869px;top:673px;width:125px;height:18px"></div>
<span class="c13 num" style="position:absolute;left:870px;top:675px;width:117px;text-align:right">5.127.000,00</span>
<div class="bx" style="left:993px;top:673px;width:99px;height:18px"></div>
<span class="c13" style="position:absolute;left:1064px;top:675px;width:10px;text-align:center">-</span>
<div class="bx" style="left:1091px;top:673px;width:98px;height:18px"></div>
<span class="c13 num" style="position:absolute;left:1092px;top:675px;width:90px;text-align:right">27.685,24</span>
<div class="bx" style="left:1188px;top:673px;width:98px;height:18px"></div>
<span class="c13" style="position:absolute;left:1258px;top:675px;width:10px;text-align:center">-</span>
<div class="bx" style="left:1285px;top:673px;width:144px;height:18px"></div>
<span class="c13 num" style="position:absolute;left:1286px;top:675px;width:136px;text-align:right">5.154.685,24</span>
<div class="bx" style="left:1428px;top:673px;width:98px;height:18px"></div>
<span class="c13" style="position:absolute;left:1498px;top:675px;width:10px;text-align:center">-</span>
<div class="bx" style="left:1525px;top:673px;width:98px;height:18px"></div>
<span class="c13" style="position:absolute;left:1595px;top:675px;width:10px;text-align:center">-</span>
<div class="bx" style="left:1622px;top:673px;width:98px;height:18px"></div>
<span class="c13 num" style="position:absolute;left:1623px;top:675px;width:90px;text-align:right">153.806,91</span>
<div class="bx" style="left:1719px;top:673px;width:139px;height:18px"></div>
<span class="c13" style="position:absolute;left:1830px;top:675px;width:10px;text-align:center">-</span>
<div class="bx" style="left:1857px;top:673px;width:98px;height:18px"></div>

<span class="c15" style="position:absolute;left:135px;top:693px;width:63px;text-align:center">96</span>
<div class="bx" style="left:198px;top:690px;width:221px;height:22px"></div>
<span class="c13 nm" style="position:absolute;left:201px;top:695px">Sofian</span>
<div class="bx" style="left:418px;top:690px;width:65px;height:22px"></div>
<span class="c13" style="position:absolute;left:419px;top:695px;width:61px;text-align:right">1</span>
<div class="bx" style="left:482px;top:690px;width:65px;height:22px"></div>
<span class="c13" style="position:absolute;left:483px;top:695px;width:61px;text-align:right">3</span>
<div class="bx" style="left:546px;top:690px;width:65px;height:22px"></div>
<span class="c13" style="position:absolute;left:547px;top:695px;width:61px;text-align:right">3</span>
<div class="bx" style="left:610px;top:690px;width:132px;height:22px"></div>
<span class="c13 nik" style="position:absolute;left:613px;top:695px">3205010703970001</span>
<i class="tri" style="left:611px;top:691px"></i>
<div class="bx" style="left:741px;top:690px;width:65px;height:22px"></div>
<span class="c13" style="position:absolute;left:744px;top:695px">TMI</span>
<div class="bx" style="left:805px;top:690px;width:65px;height:22px"></div>
<span class="c13" style="position:absolute;left:808px;top:695px">K/1</span>
<div class="bx" style="left:869px;top:690px;width:125px;height:22px"></div>
<span class="c13 num" style="position:absolute;left:870px;top:695px;width:117px;text-align:right">2.329.000,00</span>
<div class="bx" style="left:993px;top:690px;width:99px;height:22px"></div>
<span class="c13" style="position:absolute;left:1064px;top:695px;width:10px;text-align:center">-</span>
<div class="bx" style="left:1091px;top:690px;width:98px;height:22px"></div>
<span class="c13 num" style="position:absolute;left:1092px;top:695px;width:90px;text-align:right">12.574,20</span>
<div class="bx" style="left:1188px;top:690px;width:98px;height:22px"></div>
<span class="c13" style="position:absolute;left:1258px;top:695px;width:10px;text-align:center">-</span>
<div class="bx" style="left:1285px;top:690px;width:144px;height:22px"></div>
<span class="c13 num" style="position:absolute;left:1286px;top:695px;width:136px;text-align:right">2.341.574,20</span>
<div class="bx" style="left:1428px;top:690px;width:98px;height:22px"></div>
<span class="c13" style="position:absolute;left:1498px;top:695px;width:10px;text-align:center">-</span>
<div class="bx" style="left:1525px;top:690px;width:98px;height:22px"></div>
<span class="c13" style="position:absolute;left:1595px;top:695px;width:10px;text-align:center">-</span>
<div class="bx" style="left:1622px;top:690px;width:98px;height:22px"></div>
<span class="c13 num" style="position:absolute;left:1623px;top:695px;width:90px;text-align:right">69.856,65</span>
<div class="bx" style="left:1719px;top:690px;width:139px;height:22px"></div>
<span class="c13 num" style="position:absolute;left:1720px;top:695px;width:131px;text-align:right">676.161,29</span>
<div class="bx" style="left:1857px;top:690px;width:98px;height:22px"></div>

<span class="c15" style="position:absolute;left:135px;top:714px;width:63px;text-align:center">98</span>
<div class="bx" style="left:198px;top:711px;width:221px;height:22px"></div>
<span class="c13 nm" style="position:absolute;left:201px;top:716px">Andi Maulana Yusuf</span>
<div class="bx" style="left:418px;top:711px;width:65px;height:22px"></div>
<span class="c13" style="position:absolute;left:419px;top:716px;width:61px;text-align:right">1</span>
<div class="bx" style="left:482px;top:711px;width:65px;height:22px"></div>
<span class="c13" style="position:absolute;left:483px;top:716px;width:61px;text-align:right">3</span>
<div class="bx" style="left:546px;top:711px;width:65px;height:22px"></div>
<span class="c13" style="position:absolute;left:547px;top:716px;width:61px;text-align:right">3</span>
<div class="bx" style="left:610px;top:711px;width:132px;height:22px"></div>
<span class="c13 nik" style="position:absolute;left:613px;top:716px">3172021001950004</span>
<i class="tri" style="left:611px;top:712px"></i>
<div class="bx" style="left:741px;top:711px;width:65px;height:22px"></div>
<span class="c13" style="position:absolute;left:744px;top:716px">TMI</span>
<div class="bx" style="left:805px;top:711px;width:65px;height:22px"></div>
<span class="c13" style="position:absolute;left:808px;top:716px">K/2</span>
<div class="bx" style="left:869px;top:711px;width:125px;height:22px"></div>
<span class="c13 num" style="position:absolute;left:870px;top:716px;width:117px;text-align:right">3.778.000,00</span>
<div class="bx" style="left:993px;top:711px;width:99px;height:22px"></div>
<span class="c13" style="position:absolute;left:1064px;top:716px;width:10px;text-align:center">-</span>
<div class="bx" style="left:1091px;top:711px;width:98px;height:22px"></div>
<span class="c13 num" style="position:absolute;left:1092px;top:716px;width:90px;text-align:right">245.012,95</span>
<div class="bx" style="left:1188px;top:711px;width:98px;height:22px"></div>
<span class="c13" style="position:absolute;left:1258px;top:716px;width:10px;text-align:center">-</span>
<div class="bx" style="left:1285px;top:711px;width:144px;height:22px"></div>
<span class="c13 num" style="position:absolute;left:1286px;top:716px;width:136px;text-align:right">4.023.012,95</span>
<div class="bx" style="left:1428px;top:711px;width:98px;height:22px"></div>
<span class="c13" style="position:absolute;left:1498px;top:716px;width:10px;text-align:center">-</span>
<div class="bx" style="left:1525px;top:711px;width:98px;height:22px"></div>
<span class="c13" style="position:absolute;left:1595px;top:716px;width:10px;text-align:center">-</span>
<div class="bx" style="left:1622px;top:711px;width:98px;height:22px"></div>
<span class="c13 num" style="position:absolute;left:1623px;top:716px;width:90px;text-align:right">161.902,83</span>
<div class="bx" style="left:1719px;top:711px;width:139px;height:22px"></div>
<span class="c13 num" style="position:absolute;left:1720px;top:716px;width:131px;text-align:right">1.462.451,61</span>
<div class="bx" style="left:1857px;top:711px;width:98px;height:22px"></div>

<span class="c13" style="position:absolute;left:135px;top:734px;width:63px;text-align:center">99</span>
<div class="bx" style="left:198px;top:732px;width:221px;height:18px"></div>
<span class="c13 nm" style="position:absolute;left:201px;top:734px">Rensus Kudadiri</span>
<div class="bx" style="left:418px;top:732px;width:65px;height:18px"></div>
<span class="c13" style="position:absolute;left:419px;top:734px;width:61px;text-align:right">1</span>
<div class="bx" style="left:482px;top:732px;width:65px;height:18px"></div>
<span class="c13" style="position:absolute;left:483px;top:734px;width:61px;text-align:right">2</span>
<div class="bx" style="left:546px;top:732px;width:65px;height:18px"></div>
<span class="c13" style="position:absolute;left:547px;top:734px;width:61px;text-align:right">2</span>
<div class="bx" style="left:610px;top:732px;width:132px;height:18px"></div>
<span class="c13 nik" style="position:absolute;left:613px;top:734px">1211150111990001</span>
<i class="tri" style="left:611px;top:733px"></i>
<div class="bx" style="left:741px;top:732px;width:65px;height:18px"></div>
<span class="c13" style="position:absolute;left:744px;top:734px">TMI</span>
<div class="bx" style="left:805px;top:732px;width:65px;height:18px"></div>
<span class="c13" style="position:absolute;left:808px;top:734px">TK/0</span>
<div class="bx" style="left:869px;top:732px;width:125px;height:18px"></div>
<span class="c13 num" style="position:absolute;left:870px;top:734px;width:117px;text-align:right">3.778.000,00</span>
<div class="bx" style="left:993px;top:732px;width:99px;height:18px"></div>
<span class="c13" style="position:absolute;left:1064px;top:734px;width:10px;text-align:center">-</span>
<div class="bx" style="left:1091px;top:732px;width:98px;height:18px"></div>
<span class="c13 num" style="position:absolute;left:1092px;top:734px;width:90px;text-align:right">20.401,20</span>
<div class="bx" style="left:1188px;top:732px;width:98px;height:18px"></div>
<span class="c13" style="position:absolute;left:1258px;top:734px;width:10px;text-align:center">-</span>
<div class="bx" style="left:1285px;top:732px;width:144px;height:18px"></div>
<span class="c13 num" style="position:absolute;left:1286px;top:734px;width:136px;text-align:right">3.798.401,20</span>
<div class="bx" style="left:1428px;top:732px;width:98px;height:18px"></div>
<span class="c13" style="position:absolute;left:1498px;top:734px;width:10px;text-align:center">-</span>
<div class="bx" style="left:1525px;top:732px;width:98px;height:18px"></div>
<span class="c13" style="position:absolute;left:1595px;top:734px;width:10px;text-align:center">-</span>
<div class="bx" style="left:1622px;top:732px;width:98px;height:18px"></div>
<span class="c13 num" style="position:absolute;left:1623px;top:734px;width:90px;text-align:right">161.902,83</span>
<div class="bx" style="left:1719px;top:732px;width:139px;height:18px"></div>
<span class="c13" style="position:absolute;left:1830px;top:734px;width:10px;text-align:center">-</span>
<div class="bx" style="left:1857px;top:732px;width:98px;height:18px"></div>

<span class="c15" style="position:absolute;left:135px;top:752px;width:63px;text-align:center">100</span>
<div class="bx" style="left:198px;top:749px;width:221px;height:22px"></div>
<span class="c13 nm" style="position:absolute;left:201px;top:754px">Dines Haji Saputra</span>
<div class="bx" style="left:418px;top:749px;width:65px;height:22px"></div>
<span class="c13" style="position:absolute;left:419px;top:754px;width:61px;text-align:right">2</span>
<div class="bx" style="left:482px;top:749px;width:65px;height:22px"></div>
<span class="c13" style="position:absolute;left:483px;top:754px;width:61px;text-align:right">3</span>
<div class="bx" style="left:546px;top:749px;width:65px;height:22px"></div>
<span class="c13" style="position:absolute;left:547px;top:754px;width:61px;text-align:right">2</span>
<div class="bx" style="left:610px;top:749px;width:132px;height:22px"></div>
<span class="c13 nik" style="position:absolute;left:613px;top:754px">1671071504040009</span>
<i class="tri" style="left:611px;top:750px"></i>
<div class="bx" style="left:741px;top:749px;width:65px;height:22px"></div>
<span class="c13" style="position:absolute;left:744px;top:754px">TMI</span>
<div class="bx" style="left:805px;top:749px;width:65px;height:22px"></div>
<span class="c13" style="position:absolute;left:808px;top:754px">TK/0</span>
<div class="bx" style="left:869px;top:749px;width:125px;height:22px"></div>
<span class="c13 num" style="position:absolute;left:870px;top:754px;width:117px;text-align:right">2.742.000,00</span>
<div class="bx" style="left:993px;top:749px;width:99px;height:22px"></div>
<span class="c13" style="position:absolute;left:1064px;top:754px;width:10px;text-align:center">-</span>
<div class="bx" style="left:1091px;top:749px;width:98px;height:22px"></div>
<span class="c13 num" style="position:absolute;left:1092px;top:754px;width:90px;text-align:right">177.815,23</span>
<div class="bx" style="left:1188px;top:749px;width:98px;height:22px"></div>
<span class="c13" style="position:absolute;left:1258px;top:754px;width:10px;text-align:center">-</span>
<div class="bx" style="left:1285px;top:749px;width:144px;height:22px"></div>
<span class="c13 num" style="position:absolute;left:1286px;top:754px;width:136px;text-align:right">2.919.815,23</span>
<div class="bx" style="left:1428px;top:749px;width:98px;height:22px"></div>
<span class="c13" style="position:absolute;left:1498px;top:754px;width:10px;text-align:center">-</span>
<div class="bx" style="left:1525px;top:749px;width:98px;height:22px"></div>
<span class="c13" style="position:absolute;left:1595px;top:754px;width:10px;text-align:center">-</span>
<div class="bx" style="left:1622px;top:749px;width:98px;height:22px"></div>
<span class="c13 num" style="position:absolute;left:1623px;top:754px;width:90px;text-align:right">117.499,05</span>
<div class="bx" style="left:1719px;top:749px;width:139px;height:22px"></div>
<span class="c13 num" style="position:absolute;left:1720px;top:754px;width:131px;text-align:right">353.806,45</span>
<div class="bx" style="left:1857px;top:749px;width:98px;height:22px"></div>

<span class="c13" style="position:absolute;left:135px;top:772px;width:63px;text-align:center">101</span>
<div class="bx" style="left:198px;top:770px;width:221px;height:18px"></div>
<span class="c13 nm" style="position:absolute;left:201px;top:772px">Muhammad Hidayatullah</span>
<div class="bx" style="left:418px;top:770px;width:65px;height:18px"></div>
<span class="c13" style="position:absolute;left:419px;top:772px;width:61px;text-align:right">2</span>
<div class="bx" style="left:482px;top:770px;width:65px;height:18px"></div>
<span class="c13" style="position:absolute;left:483px;top:772px;width:61px;text-align:right">3</span>
<div class="bx" style="left:546px;top:770px;width:65px;height:18px"></div>
<span class="c13" style="position:absolute;left:547px;top:772px;width:61px;text-align:right">2</span>
<div class="bx" style="left:610px;top:770px;width:132px;height:18px"></div>
<span class="c13 nik" style="position:absolute;left:613px;top:772px">1671091205010003</span>
<i class="tri" style="left:611px;top:771px"></i>
<div class="bx" style="left:741px;top:770px;width:65px;height:18px"></div>
<span class="c13" style="position:absolute;left:744px;top:772px">TMI</span>
<div class="bx" style="left:805px;top:770px;width:65px;height:18px"></div>
<span class="c13" style="position:absolute;left:808px;top:772px">TK/0</span>
<div class="bx" style="left:869px;top:770px;width:125px;height:18px"></div>
<span class="c13 num" style="position:absolute;left:870px;top:772px;width:117px;text-align:right">2.742.000,00</span>
<div class="bx" style="left:993px;top:770px;width:99px;height:18px"></div>
<span class="c13" style="position:absolute;left:1064px;top:772px;width:10px;text-align:center">-</span>
<div class="bx" style="left:1091px;top:770px;width:98px;height:18px"></div>
<span class="c13 num" style="position:absolute;left:1092px;top:772px;width:90px;text-align:right">21.149,83</span>
<div class="bx" style="left:1188px;top:770px;width:98px;height:18px"></div>
<span class="c13" style="position:absolute;left:1258px;top:772px;width:10px;text-align:center">-</span>
<div class="bx" style="left:1285px;top:770px;width:144px;height:18px"></div>
<span class="c13 num" style="position:absolute;left:1286px;top:772px;width:136px;text-align:right">2.763.149,83</span>
<div class="bx" style="left:1428px;top:770px;width:98px;height:18px"></div>
<span class="c13" style="position:absolute;left:1498px;top:772px;width:10px;text-align:center">-</span>
<div class="bx" style="left:1525px;top:770px;width:98px;height:18px"></div>
<span class="c13" style="position:absolute;left:1595px;top:772px;width:10px;text-align:center">-</span>
<div class="bx" style="left:1622px;top:770px;width:98px;height:18px"></div>
<span class="c13 num" style="position:absolute;left:1623px;top:772px;width:90px;text-align:right">117.499,05</span>
<div class="bx" style="left:1719px;top:770px;width:139px;height:18px"></div>
<span class="c13 num" style="position:absolute;left:1720px;top:772px;width:131px;text-align:right">1.857.483,87</span>
<div class="bx" style="left:1857px;top:770px;width:98px;height:18px"></div>

<span class="c15" style="position:absolute;left:135px;top:790px;width:63px;text-align:center">102</span>
<div class="bx" style="left:198px;top:787px;width:221px;height:22px"></div>
<span class="c13 nm" style="position:absolute;left:201px;top:792px">Rizal</span>
<div class="bx" style="left:418px;top:787px;width:65px;height:22px"></div>
<span class="c13" style="position:absolute;left:419px;top:792px;width:61px;text-align:right">2</span>
<div class="bx" style="left:482px;top:787px;width:65px;height:22px"></div>
<span class="c13" style="position:absolute;left:483px;top:792px;width:61px;text-align:right">3</span>
<div class="bx" style="left:546px;top:787px;width:65px;height:22px"></div>
<span class="c13" style="position:absolute;left:547px;top:792px;width:61px;text-align:right">2</span>
<div class="bx" style="left:610px;top:787px;width:132px;height:22px"></div>
<span class="c13 nik" style="position:absolute;left:613px;top:792px">1671022807910006</span>
<i class="tri" style="left:611px;top:788px"></i>
<div class="bx" style="left:741px;top:787px;width:65px;height:22px"></div>
<span class="c13" style="position:absolute;left:744px;top:792px">TMI</span>
<div class="bx" style="left:805px;top:787px;width:65px;height:22px"></div>
<span class="c13" style="position:absolute;left:808px;top:792px">K/1</span>
<div class="bx" style="left:869px;top:787px;width:125px;height:22px"></div>
<span class="c13 num" style="position:absolute;left:870px;top:792px;width:117px;text-align:right">2.742.000,00</span>
<div class="bx" style="left:993px;top:787px;width:99px;height:22px"></div>
<span class="c13" style="position:absolute;left:1064px;top:792px;width:10px;text-align:center">-</span>
<div class="bx" style="left:1091px;top:787px;width:98px;height:22px"></div>
<span class="c13 num" style="position:absolute;left:1092px;top:792px;width:90px;text-align:right">21.149,83</span>
<div class="bx" style="left:1188px;top:787px;width:98px;height:22px"></div>
<span class="c13" style="position:absolute;left:1258px;top:792px;width:10px;text-align:center">-</span>
<div class="bx" style="left:1285px;top:787px;width:144px;height:22px"></div>
<span class="c13 num" style="position:absolute;left:1286px;top:792px;width:136px;text-align:right">2.763.149,83</span>
<div class="bx" style="left:1428px;top:787px;width:98px;height:22px"></div>
<span class="c13" style="position:absolute;left:1498px;top:792px;width:10px;text-align:center">-</span>
<div class="bx" style="left:1525px;top:787px;width:98px;height:22px"></div>
<span class="c13" style="position:absolute;left:1595px;top:792px;width:10px;text-align:center">-</span>
<div class="bx" style="left:1622px;top:787px;width:98px;height:22px"></div>
<span class="c13 num" style="position:absolute;left:1623px;top:792px;width:90px;text-align:right">117.499,05</span>
<div class="bx" style="left:1719px;top:787px;width:139px;height:22px"></div>
<span class="c13 num" style="position:absolute;left:1720px;top:792px;width:131px;text-align:right">265.354,84</span>
<div class="bx" style="left:1857px;top:787px;width:98px;height:22px"></div>

<span class="c13" style="position:absolute;left:135px;top:810px;width:63px;text-align:center">103</span>
<div class="bx" style="left:198px;top:808px;width:221px;height:18px"></div>
<span class="c13 nm" style="position:absolute;left:201px;top:810px">TIMOTIUS PROMANDANU</span>
<div class="bx" style="left:418px;top:808px;width:65px;height:18px"></div>
<span class="c13" style="position:absolute;left:419px;top:810px;width:61px;text-align:right">1</span>
<div class="bx" style="left:482px;top:808px;width:65px;height:18px"></div>
<span class="c13" style="position:absolute;left:483px;top:810px;width:61px;text-align:right">3</span>
<div class="bx" style="left:546px;top:808px;width:65px;height:18px"></div>
<span class="c13" style="position:absolute;left:547px;top:810px;width:61px;text-align:right">3</span>
<div class="bx" style="left:610px;top:808px;width:132px;height:18px"></div>
<span class="c13 nik" style="position:absolute;left:613px;top:810px">3172041105740001</span>
<i class="tri" style="left:611px;top:809px"></i>
<div class="bx" style="left:741px;top:808px;width:65px;height:18px"></div>
<span class="c13" style="position:absolute;left:744px;top:810px">TMI</span>
<div class="bx" style="left:805px;top:808px;width:65px;height:18px"></div>
<span class="c13" style="position:absolute;left:808px;top:810px">TK/0</span>
<div class="bx" style="left:869px;top:808px;width:125px;height:18px"></div>
<span class="c13 num" style="position:absolute;left:870px;top:810px;width:117px;text-align:right">5.500.000,00</span>
<div class="bx" style="left:993px;top:808px;width:99px;height:18px"></div>
<span class="c13 num" style="position:absolute;left:994px;top:810px;width:91px;text-align:right">1.500.000,00</span>
<div class="bx" style="left:1091px;top:808px;width:98px;height:18px"></div>
<span class="c13 num" style="position:absolute;left:1092px;top:810px;width:90px;text-align:right">29.142,51</span>
<div class="bx" style="left:1188px;top:808px;width:98px;height:18px"></div>
<span class="c13" style="position:absolute;left:1258px;top:810px;width:10px;text-align:center">-</span>
<div class="bx" style="left:1285px;top:808px;width:144px;height:18px"></div>
<span class="c13 num" style="position:absolute;left:1286px;top:810px;width:136px;text-align:right">7.029.142,51</span>
<div class="bx" style="left:1428px;top:808px;width:98px;height:18px"></div>
<span class="c13 num" style="position:absolute;left:1429px;top:810px;width:90px;text-align:right">0,01</span>
<div class="bx" style="left:1525px;top:808px;width:98px;height:18px"></div>
<span class="c13 num" style="position:absolute;left:1526px;top:810px;width:90px;text-align:right">87.864,00</span>
<div class="bx" style="left:1622px;top:808px;width:98px;height:18px"></div>
<span class="c13 num" style="position:absolute;left:1623px;top:810px;width:90px;text-align:right">161.902,83</span>
<div class="bx" style="left:1719px;top:808px;width:139px;height:18px"></div>
<span class="c13 num" style="position:absolute;left:1720px;top:810px;width:131px;text-align:right">5.500.000,00</span>
<div class="bx" style="left:1857px;top:808px;width:98px;height:18px"></div>
<span class="c13 num" style="position:absolute;left:1872.5px;top:810px">1.50</span>
<span class="c15" style="position:absolute;left:135px;top:828px;width:63px;text-align:center">104</span>
<div class="bx" style="left:198px;top:825px;width:221px;height:22px"></div>
<span class="c13 nm" style="position:absolute;left:201px;top:830px">Yudha Manggala Alaondo</span>
<div class="bx" style="left:418px;top:825px;width:65px;height:22px"></div>
<span class="c13" style="position:absolute;left:419px;top:830px;width:61px;text-align:right">1</span>
<div class="bx" style="left:482px;top:825px;width:65px;height:22px"></div>
<span class="c13" style="position:absolute;left:483px;top:830px;width:61px;text-align:right">11</span>
<div class="bx" style="left:546px;top:825px;width:65px;height:22px"></div>
<span class="c13" style="position:absolute;left:547px;top:830px;width:61px;text-align:right">11</span>
<div class="bx" style="left:610px;top:825px;width:132px;height:22px"></div>
<span class="c13 nik" style="position:absolute;left:613px;top:830px">3216053008960004</span>
<i class="tri" style="left:611px;top:826px"></i>
<div class="bx" style="left:741px;top:825px;width:65px;height:22px"></div>
<span class="c13" style="position:absolute;left:744px;top:830px">TMI</span>
<div class="bx" style="left:805px;top:825px;width:65px;height:22px"></div>
<span class="c13" style="position:absolute;left:808px;top:830px">K/2</span>
<div class="bx" style="left:869px;top:825px;width:125px;height:22px"></div>
<span class="c13 num" style="position:absolute;left:870px;top:830px;width:117px;text-align:right">3.778.000,00</span>
<div class="bx" style="left:993px;top:825px;width:99px;height:22px"></div>
<span class="c13" style="position:absolute;left:1064px;top:830px;width:10px;text-align:center">-</span>
<div class="bx" style="left:1091px;top:825px;width:98px;height:22px"></div>
<span class="c13 num" style="position:absolute;left:1092px;top:830px;width:90px;text-align:right">29.142,51</span>
<div class="bx" style="left:1188px;top:825px;width:98px;height:22px"></div>
<span class="c13" style="position:absolute;left:1258px;top:830px;width:10px;text-align:center">-</span>
<div class="bx" style="left:1285px;top:825px;width:144px;height:22px"></div>
<span class="c13 num" style="position:absolute;left:1286px;top:830px;width:136px;text-align:right">3.807.142,51</span>
<div class="bx" style="left:1428px;top:825px;width:98px;height:22px"></div>
<span class="c13" style="position:absolute;left:1498px;top:830px;width:10px;text-align:center">-</span>
<div class="bx" style="left:1525px;top:825px;width:98px;height:22px"></div>
<span class="c13" style="position:absolute;left:1595px;top:830px;width:10px;text-align:center">-</span>
<div class="bx" style="left:1622px;top:825px;width:98px;height:22px"></div>
<span class="c13 num" style="position:absolute;left:1623px;top:830px;width:90px;text-align:right">161.902,83</span>
<div class="bx" style="left:1719px;top:825px;width:139px;height:22px"></div>
<span class="c13 num" style="position:absolute;left:1720px;top:830px;width:131px;text-align:right">5.397.000,00</span>
<div class="bx" style="left:1857px;top:825px;width:98px;height:22px"></div>

<span class="c13" style="position:absolute;left:135px;top:848px;width:63px;text-align:center">105</span>
<div class="bx" style="left:198px;top:846px;width:221px;height:18px"></div>
<span class="c13 nm" style="position:absolute;left:201px;top:848px">Diko Tri Abilah</span>
<div class="bx" style="left:418px;top:846px;width:65px;height:18px"></div>
<span class="c13" style="position:absolute;left:419px;top:848px;width:61px;text-align:right">1</span>
<div class="bx" style="left:482px;top:846px;width:65px;height:18px"></div>
<span class="c13" style="position:absolute;left:483px;top:848px;width:61px;text-align:right">2</span>
<div class="bx" style="left:546px;top:846px;width:65px;height:18px"></div>
<span class="c13" style="position:absolute;left:547px;top:848px;width:61px;text-align:right">2</span>
<div class="bx" style="left:610px;top:846px;width:132px;height:18px"></div>
<span class="c13 nik" style="position:absolute;left:613px;top:848px">1671070312050002</span>
<i class="tri" style="left:611px;top:847px"></i>
<div class="bx" style="left:741px;top:846px;width:65px;height:18px"></div>
<span class="c13" style="position:absolute;left:744px;top:848px">TMI</span>
<div class="bx" style="left:805px;top:846px;width:65px;height:18px"></div>
<span class="c13" style="position:absolute;left:808px;top:848px">TK/0</span>
<div class="bx" style="left:869px;top:846px;width:125px;height:18px"></div>
<span class="c13 num" style="position:absolute;left:870px;top:848px;width:117px;text-align:right">3.917.000,00</span>
<div class="bx" style="left:993px;top:846px;width:99px;height:18px"></div>
<span class="c13" style="position:absolute;left:1064px;top:848px;width:10px;text-align:center">-</span>
<div class="bx" style="left:1091px;top:846px;width:98px;height:18px"></div>
<span class="c13 num" style="position:absolute;left:1092px;top:848px;width:90px;text-align:right">21.151,80</span>
<div class="bx" style="left:1188px;top:846px;width:98px;height:18px"></div>
<span class="c13" style="position:absolute;left:1258px;top:848px;width:10px;text-align:center">-</span>
<div class="bx" style="left:1285px;top:846px;width:144px;height:18px"></div>
<span class="c13 num" style="position:absolute;left:1286px;top:848px;width:136px;text-align:right">3.938.151,80</span>
<div class="bx" style="left:1428px;top:846px;width:98px;height:18px"></div>
<span class="c13" style="position:absolute;left:1498px;top:848px;width:10px;text-align:center">-</span>
<div class="bx" style="left:1525px;top:846px;width:98px;height:18px"></div>
<span class="c13" style="position:absolute;left:1595px;top:848px;width:10px;text-align:center">-</span>
<div class="bx" style="left:1622px;top:846px;width:98px;height:18px"></div>
<span class="c13 num" style="position:absolute;left:1623px;top:848px;width:90px;text-align:right">117.499,05</span>
<div class="bx" style="left:1719px;top:846px;width:139px;height:18px"></div>
<span class="c13" style="position:absolute;left:1830px;top:848px;width:10px;text-align:center">-</span>
<div class="bx" style="left:1857px;top:846px;width:98px;height:18px"></div>

<span class="c15" style="position:absolute;left:135px;top:866px;width:63px;text-align:center">106</span>
<div class="bx" style="left:198px;top:863px;width:221px;height:22px"></div>
<span class="c13 nm" style="position:absolute;left:201px;top:868px">Yunan Alpayed</span>
<div class="bx" style="left:418px;top:863px;width:65px;height:22px"></div>
<span class="c13" style="position:absolute;left:419px;top:868px;width:61px;text-align:right">1</span>
<div class="bx" style="left:482px;top:863px;width:65px;height:22px"></div>
<span class="c13" style="position:absolute;left:483px;top:868px;width:61px;text-align:right">5</span>
<div class="bx" style="left:546px;top:863px;width:65px;height:22px"></div>
<span class="c13" style="position:absolute;left:547px;top:868px;width:61px;text-align:right">5</span>
<div class="bx" style="left:610px;top:863px;width:132px;height:22px"></div>
<span class="c13 nik" style="position:absolute;left:613px;top:868px">1671040912030005</span>
<i class="tri" style="left:611px;top:864px"></i>
<div class="bx" style="left:741px;top:863px;width:65px;height:22px"></div>
<span class="c13" style="position:absolute;left:744px;top:868px">TMI</span>
<div class="bx" style="left:805px;top:863px;width:65px;height:22px"></div>
<span class="c13" style="position:absolute;left:808px;top:868px">K/1</span>
<div class="bx" style="left:869px;top:863px;width:125px;height:22px"></div>
<span class="c13 num" style="position:absolute;left:870px;top:868px;width:117px;text-align:right">2.742.000,00</span>
<div class="bx" style="left:993px;top:863px;width:99px;height:22px"></div>
<span class="c13" style="position:absolute;left:1064px;top:868px;width:10px;text-align:center">-</span>
<div class="bx" style="left:1091px;top:863px;width:98px;height:22px"></div>
<span class="c13 num" style="position:absolute;left:1092px;top:868px;width:90px;text-align:right">21.149,83</span>
<div class="bx" style="left:1188px;top:863px;width:98px;height:22px"></div>
<span class="c13" style="position:absolute;left:1258px;top:868px;width:10px;text-align:center">-</span>
<div class="bx" style="left:1285px;top:863px;width:144px;height:22px"></div>
<span class="c13 num" style="position:absolute;left:1286px;top:868px;width:136px;text-align:right">2.763.149,83</span>
<div class="bx" style="left:1428px;top:863px;width:98px;height:22px"></div>
<span class="c13" style="position:absolute;left:1498px;top:868px;width:10px;text-align:center">-</span>
<div class="bx" style="left:1525px;top:863px;width:98px;height:22px"></div>
<span class="c13" style="position:absolute;left:1595px;top:868px;width:10px;text-align:center">-</span>
<div class="bx" style="left:1622px;top:863px;width:98px;height:22px"></div>
<span class="c13 num" style="position:absolute;left:1623px;top:868px;width:90px;text-align:right">117.499,05</span>
<div class="bx" style="left:1719px;top:863px;width:139px;height:22px"></div>
<span class="c13 num" style="position:absolute;left:1720px;top:868px;width:131px;text-align:right">3.917.000,00</span>
<div class="bx" style="left:1857px;top:863px;width:98px;height:22px"></div>
<span class="c13 num" style="position:absolute;left:1872.5px;top:868px">1.82</span>
<span class="c13" style="position:absolute;left:135px;top:886px;width:63px;text-align:center">107</span>
<div class="bx" style="left:198px;top:884px;width:221px;height:18px"></div>
<span class="c13 nm" style="position:absolute;left:201px;top:886px">Muhammad Aziz</span>
<div class="bx" style="left:418px;top:884px;width:65px;height:18px"></div>
<span class="c13" style="position:absolute;left:419px;top:886px;width:61px;text-align:right">1</span>
<div class="bx" style="left:482px;top:884px;width:65px;height:18px"></div>
<span class="c13" style="position:absolute;left:483px;top:886px;width:61px;text-align:right">4</span>
<div class="bx" style="left:546px;top:884px;width:65px;height:18px"></div>
<span class="c13" style="position:absolute;left:547px;top:886px;width:61px;text-align:right">4</span>
<div class="bx" style="left:610px;top:884px;width:132px;height:18px"></div>
<span class="c13 nik" style="position:absolute;left:613px;top:886px">1610052101010003</span>
<i class="tri" style="left:611px;top:885px"></i>
<div class="bx" style="left:741px;top:884px;width:65px;height:18px"></div>
<span class="c13" style="position:absolute;left:744px;top:886px">TMI</span>
<div class="bx" style="left:805px;top:884px;width:65px;height:18px"></div>
<span class="c13" style="position:absolute;left:808px;top:886px">TK/0</span>
<div class="bx" style="left:869px;top:884px;width:125px;height:18px"></div>
<span class="c13 num" style="position:absolute;left:870px;top:886px;width:117px;text-align:right">2.742.000,00</span>
<div class="bx" style="left:993px;top:884px;width:99px;height:18px"></div>
<span class="c13" style="position:absolute;left:1064px;top:886px;width:10px;text-align:center">-</span>
<div class="bx" style="left:1091px;top:884px;width:98px;height:18px"></div>
<span class="c13 num" style="position:absolute;left:1092px;top:886px;width:90px;text-align:right">177.815,23</span>
<div class="bx" style="left:1188px;top:884px;width:98px;height:18px"></div>
<span class="c13" style="position:absolute;left:1258px;top:886px;width:10px;text-align:center">-</span>
<div class="bx" style="left:1285px;top:884px;width:144px;height:18px"></div>
<span class="c13 num" style="position:absolute;left:1286px;top:886px;width:136px;text-align:right">2.919.815,23</span>
<div class="bx" style="left:1428px;top:884px;width:98px;height:18px"></div>
<span class="c13" style="position:absolute;left:1498px;top:886px;width:10px;text-align:center">-</span>
<div class="bx" style="left:1525px;top:884px;width:98px;height:18px"></div>
<span class="c13" style="position:absolute;left:1595px;top:886px;width:10px;text-align:center">-</span>
<div class="bx" style="left:1622px;top:884px;width:98px;height:18px"></div>
<span class="c13 num" style="position:absolute;left:1623px;top:886px;width:90px;text-align:right">117.499,05</span>
<div class="bx" style="left:1719px;top:884px;width:139px;height:18px"></div>
<span class="c13 num" style="position:absolute;left:1720px;top:886px;width:131px;text-align:right">3.917.000,00</span>
<div class="bx" style="left:1857px;top:884px;width:98px;height:18px"></div>
<span class="c13 num" style="position:absolute;left:1872.5px;top:886px">2.37</span>
<span class="c15" style="position:absolute;left:135px;top:904px;width:63px;text-align:center">108</span>
<div class="bx" style="left:198px;top:901px;width:221px;height:22px"></div>
<span class="c13 nm" style="position:absolute;left:201px;top:906px">Ibrahim Alaminy</span>
<div class="bx" style="left:418px;top:901px;width:65px;height:22px"></div>
<span class="c13" style="position:absolute;left:419px;top:906px;width:61px;text-align:right">1</span>
<div class="bx" style="left:482px;top:901px;width:65px;height:22px"></div>
<span class="c13" style="position:absolute;left:483px;top:906px;width:61px;text-align:right">2</span>
<div class="bx" style="left:546px;top:901px;width:65px;height:22px"></div>
<span class="c13" style="position:absolute;left:547px;top:906px;width:61px;text-align:right">2</span>
<div class="bx" style="left:610px;top:901px;width:132px;height:22px"></div>
<span class="c13 nik" style="position:absolute;left:613px;top:906px">3271050401970006</span>
<i class="tri" style="left:611px;top:902px"></i>
<div class="bx" style="left:741px;top:901px;width:65px;height:22px"></div>
<span class="c13" style="position:absolute;left:744px;top:906px">TMI</span>
<div class="bx" style="left:805px;top:901px;width:65px;height:22px"></div>
<span class="c13" style="position:absolute;left:808px;top:906px">TK/0</span>
<div class="bx" style="left:869px;top:901px;width:125px;height:22px"></div>
<span class="c13 num" style="position:absolute;left:870px;top:906px;width:117px;text-align:right">5.127.000,00</span>
<div class="bx" style="left:993px;top:901px;width:99px;height:22px"></div>
<span class="c13" style="position:absolute;left:1064px;top:906px;width:10px;text-align:center">-</span>
<div class="bx" style="left:1091px;top:901px;width:98px;height:22px"></div>
<span class="c13 num" style="position:absolute;left:1092px;top:906px;width:90px;text-align:right">27.685,80</span>
<div class="bx" style="left:1188px;top:901px;width:98px;height:22px"></div>
<span class="c13" style="position:absolute;left:1258px;top:906px;width:10px;text-align:center">-</span>
<div class="bx" style="left:1285px;top:901px;width:144px;height:22px"></div>
<span class="c13 num" style="position:absolute;left:1286px;top:906px;width:136px;text-align:right">5.154.685,80</span>
<div class="bx" style="left:1428px;top:901px;width:98px;height:22px"></div>
<span class="c13" style="position:absolute;left:1498px;top:906px;width:10px;text-align:center">-</span>
<div class="bx" style="left:1525px;top:901px;width:98px;height:22px"></div>
<span class="c13" style="position:absolute;left:1595px;top:906px;width:10px;text-align:center">-</span>
<div class="bx" style="left:1622px;top:901px;width:98px;height:22px"></div>
<span class="c13 num" style="position:absolute;left:1623px;top:906px;width:90px;text-align:right">153.806,91</span>
<div class="bx" style="left:1719px;top:901px;width:139px;height:22px"></div>
<span class="c13" style="position:absolute;left:1830px;top:906px;width:10px;text-align:center">-</span>
<div class="bx" style="left:1857px;top:901px;width:98px;height:22px"></div>

<span class="c13" style="position:absolute;left:135px;top:924px;width:63px;text-align:center">109</span>
<div class="bx" style="left:198px;top:922px;width:221px;height:18px"></div>
<span class="c13 nm" style="position:absolute;left:201px;top:924px">Wempy Marlindo</span>
<div class="bx" style="left:418px;top:922px;width:65px;height:18px"></div>
<span class="c13" style="position:absolute;left:419px;top:924px;width:61px;text-align:right">1</span>
<div class="bx" style="left:482px;top:922px;width:65px;height:18px"></div>
<span class="c13" style="position:absolute;left:483px;top:924px;width:61px;text-align:right">2</span>
<div class="bx" style="left:546px;top:922px;width:65px;height:18px"></div>
<span class="c13" style="position:absolute;left:547px;top:924px;width:61px;text-align:right">2</span>
<div class="bx" style="left:610px;top:922px;width:132px;height:18px"></div>
<span class="c13 nik" style="position:absolute;left:613px;top:924px">3671092803850002</span>
<i class="tri" style="left:611px;top:923px"></i>
<div class="bx" style="left:741px;top:922px;width:65px;height:18px"></div>
<span class="c13" style="position:absolute;left:744px;top:924px">TMI</span>
<div class="bx" style="left:805px;top:922px;width:65px;height:18px"></div>
<span class="c13" style="position:absolute;left:808px;top:924px">K/2</span>
<div class="bx" style="left:869px;top:922px;width:125px;height:18px"></div>
<span class="c13 num" style="position:absolute;left:870px;top:924px;width:117px;text-align:right">4.793.000,00</span>
<div class="bx" style="left:993px;top:922px;width:99px;height:18px"></div>
<span class="c13" style="position:absolute;left:1064px;top:924px;width:10px;text-align:center">-</span>
<div class="bx" style="left:1091px;top:922px;width:98px;height:18px"></div>
<span class="c13 num" style="position:absolute;left:1092px;top:924px;width:90px;text-align:right">25.882,20</span>
<div class="bx" style="left:1188px;top:922px;width:98px;height:18px"></div>
<span class="c13" style="position:absolute;left:1258px;top:924px;width:10px;text-align:center">-</span>
<div class="bx" style="left:1285px;top:922px;width:144px;height:18px"></div>
<span class="c13 num" style="position:absolute;left:1286px;top:924px;width:136px;text-align:right">4.818.882,20</span>
<div class="bx" style="left:1428px;top:922px;width:98px;height:18px"></div>
<span class="c13" style="position:absolute;left:1498px;top:924px;width:10px;text-align:center">-</span>
<div class="bx" style="left:1525px;top:922px;width:98px;height:18px"></div>
<span class="c13" style="position:absolute;left:1595px;top:924px;width:10px;text-align:center">-</span>
<div class="bx" style="left:1622px;top:922px;width:98px;height:18px"></div>
<span class="c13 num" style="position:absolute;left:1623px;top:924px;width:90px;text-align:right">143.767,59</span>
<div class="bx" style="left:1719px;top:922px;width:139px;height:18px"></div>
<span class="c13" style="position:absolute;left:1830px;top:924px;width:10px;text-align:center">-</span>
<div class="bx" style="left:1857px;top:922px;width:98px;height:18px"></div>

<span class="c15" style="position:absolute;left:135px;top:942px;width:63px;text-align:center">110</span>
<div class="bx" style="left:198px;top:939px;width:221px;height:22px"></div>
<span class="c13 nm" style="position:absolute;left:201px;top:944px">Aditya Indra Savitra</span>
<div class="bx" style="left:418px;top:939px;width:65px;height:22px"></div>
<span class="c13" style="position:absolute;left:419px;top:944px;width:61px;text-align:right">1</span>
<div class="bx" style="left:482px;top:939px;width:65px;height:22px"></div>
<span class="c13" style="position:absolute;left:483px;top:944px;width:61px;text-align:right">2</span>
<div class="bx" style="left:546px;top:939px;width:65px;height:22px"></div>
<span class="c13" style="position:absolute;left:547px;top:944px;width:61px;text-align:right">2</span>
<div class="bx" style="left:610px;top:939px;width:132px;height:22px"></div>
<span class="c13 nik" style="position:absolute;left:613px;top:944px">3271050706000012</span>
<i class="tri" style="left:611px;top:940px"></i>
<div class="bx" style="left:741px;top:939px;width:65px;height:22px"></div>
<span class="c13" style="position:absolute;left:744px;top:944px">TMI</span>
<div class="bx" style="left:805px;top:939px;width:65px;height:22px"></div>
<span class="c13" style="position:absolute;left:808px;top:944px">TK/0</span>
<div class="bx" style="left:869px;top:939px;width:125px;height:22px"></div>
<span class="c13 num" style="position:absolute;left:870px;top:944px;width:117px;text-align:right">4.877.211,00</span>
<div class="bx" style="left:993px;top:939px;width:99px;height:22px"></div>
<span class="c13" style="position:absolute;left:1064px;top:944px;width:10px;text-align:center">-</span>
<div class="bx" style="left:1091px;top:939px;width:98px;height:22px"></div>
<span class="c13 num" style="position:absolute;left:1092px;top:944px;width:90px;text-align:right">26.336,94</span>
<div class="bx" style="left:1188px;top:939px;width:98px;height:22px"></div>
<span class="c13" style="position:absolute;left:1258px;top:944px;width:10px;text-align:center">-</span>
<div class="bx" style="left:1285px;top:939px;width:144px;height:22px"></div>
<span class="c13 num" style="position:absolute;left:1286px;top:944px;width:136px;text-align:right">4.903.547,94</span>
<div class="bx" style="left:1428px;top:939px;width:98px;height:22px"></div>
<span class="c13" style="position:absolute;left:1498px;top:944px;width:10px;text-align:center">-</span>
<div class="bx" style="left:1525px;top:939px;width:98px;height:22px"></div>
<span class="c13" style="position:absolute;left:1595px;top:944px;width:10px;text-align:center">-</span>
<div class="bx" style="left:1622px;top:939px;width:98px;height:22px"></div>
<span class="c13" style="position:absolute;left:1692px;top:944px;width:10px;text-align:center">-</span>
<div class="bx" style="left:1719px;top:939px;width:139px;height:22px"></div>
<span class="c13" style="position:absolute;left:1830px;top:944px;width:10px;text-align:center">-</span>
<div class="bx" style="left:1857px;top:939px;width:98px;height:22px"></div>

<span class="c13" style="position:absolute;left:135px;top:962px;width:63px;text-align:center">111</span>
<div class="bx" style="left:198px;top:960px;width:221px;height:18px"></div>
<span class="c13 nm" style="position:absolute;left:201px;top:962px">Muhammad Satria Pratama Putra</span>
<div class="bx" style="left:418px;top:960px;width:65px;height:18px"></div>
<span class="c13" style="position:absolute;left:419px;top:962px;width:61px;text-align:right">1</span>
<div class="bx" style="left:482px;top:960px;width:65px;height:18px"></div>
<span class="c13" style="position:absolute;left:483px;top:962px;width:61px;text-align:right">5</span>
<div class="bx" style="left:546px;top:960px;width:65px;height:18px"></div>
<span class="c13" style="position:absolute;left:547px;top:962px;width:61px;text-align:right">5</span>
<div class="bx" style="left:610px;top:960px;width:132px;height:18px"></div>
<span class="c13 nik" style="position:absolute;left:613px;top:962px">1610050609020002</span>
<i class="tri" style="left:611px;top:961px"></i>
<div class="bx" style="left:741px;top:960px;width:65px;height:18px"></div>
<span class="c13" style="position:absolute;left:744px;top:962px">TMI</span>
<div class="bx" style="left:805px;top:960px;width:65px;height:18px"></div>
<span class="c13" style="position:absolute;left:808px;top:962px">TK/0</span>
<div class="bx" style="left:869px;top:960px;width:125px;height:18px"></div>
<span class="c13 num" style="position:absolute;left:870px;top:962px;width:117px;text-align:right">2.742.000,00</span>
<div class="bx" style="left:993px;top:960px;width:99px;height:18px"></div>
<span class="c13" style="position:absolute;left:1064px;top:962px;width:10px;text-align:center">-</span>
<div class="bx" style="left:1091px;top:960px;width:98px;height:18px"></div>
<span class="c13 num" style="position:absolute;left:1092px;top:962px;width:90px;text-align:right">177.815,23</span>
<div class="bx" style="left:1188px;top:960px;width:98px;height:18px"></div>
<span class="c13" style="position:absolute;left:1258px;top:962px;width:10px;text-align:center">-</span>
<div class="bx" style="left:1285px;top:960px;width:144px;height:18px"></div>
<span class="c13 num" style="position:absolute;left:1286px;top:962px;width:136px;text-align:right">2.919.815,23</span>
<div class="bx" style="left:1428px;top:960px;width:98px;height:18px"></div>
<span class="c13" style="position:absolute;left:1498px;top:962px;width:10px;text-align:center">-</span>
<div class="bx" style="left:1525px;top:960px;width:98px;height:18px"></div>
<span class="c13" style="position:absolute;left:1595px;top:962px;width:10px;text-align:center">-</span>
<div class="bx" style="left:1622px;top:960px;width:98px;height:18px"></div>
<span class="c13 num" style="position:absolute;left:1623px;top:962px;width:90px;text-align:right">117.499,05</span>
<div class="bx" style="left:1719px;top:960px;width:139px;height:18px"></div>
<span class="c13 num" style="position:absolute;left:1720px;top:962px;width:131px;text-align:right">3.917.000,00</span>
<div class="bx" style="left:1857px;top:960px;width:98px;height:18px"></div>
<span class="c13 num" style="position:absolute;left:1872.5px;top:962px">2.57</span>
<i style="position:absolute;left:0;top:449px;width:1898px;height:1px;background:#8a8a8a"></i>
<i style="position:absolute;left:869px;top:259px;width:1px;height:719px;background:#8a8a8a"></i>
</div>
<div class="colhdr">
<span class="ch" style="left:25px;width:109px">A</span>
<i class="chl" style="left:134px"></i>
<span class="ch" style="left:135px;width:63px">B</span>
<i class="chl" style="left:198px"></i>
<span class="ch" style="left:199px;width:219px">C</span>
<i class="chl" style="left:418px"></i>
<span class="ch" style="left:419px;width:63px">D</span>
<i class="chl" style="left:482px"></i>
<span class="ch" style="left:483px;width:63px">E</span>
<i class="chl" style="left:546px"></i>
<span class="ch" style="left:547px;width:63px">F</span>
<i class="chl" style="left:610px"></i>
<span class="ch" style="left:611px;width:130px">G</span>
<i class="chl" style="left:741px"></i>
<span class="ch" style="left:742px;width:63px">H</span>
<i class="chl" style="left:805px"></i>
<span class="ch" style="left:806px;width:63px">I</span>
<i class="chl" style="left:869px"></i>
<span class="ch" style="left:870px;width:123px">R</span>
<i class="chl" style="left:993px"></i>
<span class="ch" style="left:994px;width:97px">S</span>
<i class="chl" style="left:1091px"></i>
<span class="ch" style="left:1092px;width:96px">T</span>
<i class="chl" style="left:1188px"></i>
<span class="ch" style="left:1189px;width:96px">U</span>
<i class="chl" style="left:1285px"></i>
<span class="ch" style="left:1286px;width:142px">V</span>
<i class="chl" style="left:1428px"></i>
<span class="ch" style="left:1429px;width:96px">W</span>
<i class="chl" style="left:1525px"></i>
<span class="ch" style="left:1526px;width:96px">X</span>
<i class="chl" style="left:1622px"></i>
<span class="ch" style="left:1623px;width:96px">Y</span>
<i class="chl" style="left:1719px"></i>
<span class="ch" style="left:1720px;width:137px">Z</span>
<i class="chl" style="left:1857px"></i>
<span class="ch" style="left:1858px;width:96px">AA</span>
<i class="chl" style="left:867px"></i>
<i class="chl" style="left:871px"></i>
</div>
<div class="corner"><svg width="25" height="16" viewBox="0 0 25 16"><path d="M22.500 4.500V13.500H13.500Z" fill="#8a8a8a"/></svg></div>
<div class="rowhdr">
<span class="rh" style="top:276px;height:16px;line-height:15px">1</span>
<i class="rhl" style="top:292px"></i>
<span class="rh" style="top:293px;height:16px;line-height:15px">2</span>
<i class="rhl" style="top:309px"></i>
<span class="rh" style="top:310px;height:37px;line-height:57px">3</span>
<i class="rhl" style="top:347px"></i>
<span class="rh" style="top:348px;height:37px;line-height:57px">4</span>
<i class="rhl" style="top:385px"></i>
<span class="rh" style="top:386px;height:63px;line-height:109px">5</span>
<i class="rhl" style="top:449px"></i>
<span class="rh f" style="top:450px;height:20px;line-height:23px">6</span>
<i class="rhl" style="top:470px"></i>
<span class="rh f" style="top:471px;height:16px;line-height:15px">33</span>
<i class="rhl" style="top:487px"></i>
<i class="rhl" style="top:469px;height:3px;background:#0f0f0f;border-top:1px solid #7a7a7a;border-bottom:1px solid #7a7a7a;box-sizing:border-box"></i>
<span class="rh f" style="top:488px;height:16px;line-height:15px">35</span>
<i class="rhl" style="top:504px"></i>
<i class="rhl" style="top:486px;height:3px;background:#0f0f0f;border-top:1px solid #7a7a7a;border-bottom:1px solid #7a7a7a;box-sizing:border-box"></i>
<span class="rh f" style="top:505px;height:20px;line-height:23px">36</span>
<i class="rhl" style="top:525px"></i>
<span class="rh f" style="top:526px;height:16px;line-height:15px">37</span>
<i class="rhl" style="top:542px"></i>
<span class="rh f" style="top:543px;height:16px;line-height:15px">47</span>
<i class="rhl" style="top:559px"></i>
<i class="rhl" style="top:541px;height:3px;background:#0f0f0f;border-top:1px solid #7a7a7a;border-bottom:1px solid #7a7a7a;box-sizing:border-box"></i>
<span class="rh f" style="top:560px;height:20px;line-height:23px">54</span>
<i class="rhl" style="top:580px"></i>
<i class="rhl" style="top:558px;height:3px;background:#0f0f0f;border-top:1px solid #7a7a7a;border-bottom:1px solid #7a7a7a;box-sizing:border-box"></i>
<span class="rh f" style="top:581px;height:16px;line-height:15px">69</span>
<i class="rhl" style="top:597px"></i>
<i class="rhl" style="top:579px;height:3px;background:#0f0f0f;border-top:1px solid #7a7a7a;border-bottom:1px solid #7a7a7a;box-sizing:border-box"></i>
<span class="rh f" style="top:598px;height:16px;line-height:15px">87</span>
<i class="rhl" style="top:614px"></i>
<i class="rhl" style="top:596px;height:3px;background:#0f0f0f;border-top:1px solid #7a7a7a;border-bottom:1px solid #7a7a7a;box-sizing:border-box"></i>
<span class="rh f" style="top:615px;height:16px;line-height:15px">93</span>
<i class="rhl" style="top:631px"></i>
<i class="rhl" style="top:613px;height:3px;background:#0f0f0f;border-top:1px solid #7a7a7a;border-bottom:1px solid #7a7a7a;box-sizing:border-box"></i>
<span class="rh f" style="top:632px;height:20px;line-height:23px">96</span>
<i class="rhl" style="top:652px"></i>
<i class="rhl" style="top:630px;height:3px;background:#0f0f0f;border-top:1px solid #7a7a7a;border-bottom:1px solid #7a7a7a;box-sizing:border-box"></i>
<span class="rh f" style="top:653px;height:20px;line-height:23px">98</span>
<i class="rhl" style="top:673px"></i>
<i class="rhl" style="top:651px;height:3px;background:#0f0f0f;border-top:1px solid #7a7a7a;border-bottom:1px solid #7a7a7a;box-sizing:border-box"></i>
<span class="rh f" style="top:674px;height:16px;line-height:15px">99</span>
<i class="rhl" style="top:690px"></i>
<span class="rh f" style="top:691px;height:20px;line-height:23px">100</span>
<i class="rhl" style="top:711px"></i>
<span class="rh f" style="top:712px;height:20px;line-height:23px">102</span>
<i class="rhl" style="top:732px"></i>
<i class="rhl" style="top:710px;height:3px;background:#0f0f0f;border-top:1px solid #7a7a7a;border-bottom:1px solid #7a7a7a;box-sizing:border-box"></i>
<span class="rh f" style="top:733px;height:16px;line-height:15px">103</span>
<i class="rhl" style="top:749px"></i>
<span class="rh f" style="top:750px;height:20px;line-height:23px">104</span>
<i class="rhl" style="top:770px"></i>
<span class="rh f" style="top:771px;height:16px;line-height:15px">105</span>
<i class="rhl" style="top:787px"></i>
<span class="rh f" style="top:788px;height:20px;line-height:23px">106</span>
<i class="rhl" style="top:808px"></i>
<span class="rh f" style="top:809px;height:16px;line-height:15px">107</span>
<i class="rhl" style="top:825px"></i>
<span class="rh f" style="top:826px;height:20px;line-height:23px">108</span>
<i class="rhl" style="top:846px"></i>
<span class="rh f" style="top:847px;height:16px;line-height:15px">109</span>
<i class="rhl" style="top:863px"></i>
<span class="rh f" style="top:864px;height:20px;line-height:23px">110</span>
<i class="rhl" style="top:884px"></i>
<span class="rh f" style="top:885px;height:16px;line-height:15px">111</span>
<i class="rhl" style="top:901px"></i>
<span class="rh f" style="top:902px;height:20px;line-height:23px">112</span>
<i class="rhl" style="top:922px"></i>
<span class="rh f" style="top:923px;height:16px;line-height:15px">113</span>
<i class="rhl" style="top:939px"></i>
<span class="rh f" style="top:940px;height:20px;line-height:23px">114</span>
<i class="rhl" style="top:960px"></i>
<span class="rh f" style="top:961px;height:16px;line-height:15px">115</span>
<i class="rhl" style="top:977px"></i>
</div>
</div>
<div id="sheettabs">
<div class="ab" style="left:0;top:978px;width:1920px;height:32px;background:#0f0f0f"></div>
<div class="ab" style="left:1898px;top:259px;width:22px;height:719px;background:#0f0f0f"></div>
<div class="ab" style="left:1905.500px;top:276.500px;width:8px;height:368.500px;border-radius:4px;background:#9d9d9d"></div>
<svg class="ab" style="left:1904.5px;top:263px" width="10" height="7" viewBox="0 0 10 7"><path d="M5 0.500L9.500 6.500H0.500z" fill="#8a8a8a"/></svg>
<svg class="ab" style="left:1904.5px;top:963px" width="10" height="7" viewBox="0 0 10 7"><path d="M5 6.500L9.500 0.500H0.500z" fill="#8a8a8a"/></svg>
<svg class="ab" style="left:27px;top:987px" width="9" height="13" viewBox="0 0 9 13"><path d="M7.500 1L1.500 6.500l6 5.500" fill="none" stroke="#b8b8b8" stroke-width="1.400"/></svg>
<svg class="ab" style="left:59px;top:987px" width="9" height="13" viewBox="0 0 9 13"><path d="M1.500 1L7.500 6.500l-6 5.500" fill="none" stroke="#8a8a8a" stroke-width="1.400"/></svg>
<i class="ab" style="left:90.500px;top:992.500px;width:2.500px;height:2.500px;border-radius:1.300px;background:#d8d8d8;box-shadow:4px 0 0 #d8d8d8,8px 0 0 #d8d8d8"></i>
<span class="t" style="left:122.80px;top:984.30px;font: 400 14px/20px 'Liberation Sans',sans-serif;color:#f2f2f2;letter-spacing:-0.660px">11. RESIGN</span>
<i class="ab" style="left:202.8px;top:986px;width:1px;height:16px;background:#5a5a5a"></i>
<span class="t" style="left:216.20px;top:984.30px;font: 400 14px/20px 'Liberation Sans',sans-serif;color:#f2f2f2;letter-spacing:-0.635px">12. GAJI CBN</span>
<i class="ab" style="left:308.8px;top:986px;width:1px;height:16px;background:#5a5a5a"></i>
<span class="t" style="left:322.80px;top:984.30px;font: 400 14px/20px 'Liberation Sans',sans-serif;color:#f2f2f2;letter-spacing:-0.813px">12. INSENTIF PERFORMANCE</span>
<i class="ab" style="left:517.2px;top:986px;width:1px;height:16px;background:#5a5a5a"></i>
<span class="t" style="left:530.50px;top:984.30px;font: 400 14px/20px 'Liberation Sans',sans-serif;color:#f2f2f2;letter-spacing:-0.804px">12. INSENTIF SALES</span>
<i class="ab" style="left:663.8px;top:986px;width:1px;height:16px;background:#5a5a5a"></i>
<span class="t" style="left:678.80px;top:984.30px;font: 400 14px/20px 'Liberation Sans',sans-serif;color:#f2f2f2;letter-spacing:-0.459px">12. GAJI CBN (DATA BARU)</span>
<i class="ab" style="left:859.5px;top:986px;width:1px;height:16px;background:#5a5a5a"></i>
<div class="ab" style="left:865px;top:978px;width:201.500px;height:28px;border-radius:0 0 6px 6px;background:linear-gradient(#ffffff,#eef6ea 45%,#d5ebcd)"></div>
<span class="t" style="left:872.20px;top:981.30px;font: 400 14px/20px 'Liberation Sans',sans-serif;color:#223a29;letter-spacing:-0.358px">JAN - DESEMBER FINAL 2025</span>
<i class="ab" style="left:872.500px;top:1001px;width:186px;height:2px;background:#2e8b4e;border-radius:1px"></i>
<div class="ab" style="left:1075px;top:982.500px;width:256.500px;height:23.500px;border-radius:4px;background:#7fd14b"></div>
<i class="ab" style="left:1069.8px;top:986px;width:1px;height:16px;background:#5a5a5a"></i>
<span class="t" style="left:1086.20px;top:984.30px;font: 400 14px/20px 'Liberation Sans',sans-serif;color:#14300a;letter-spacing:-0.689px">JAN - DESEMBER PPH SETAHUN FINA</span>
<i class="ab" style="left:1336.2px;top:986px;width:1px;height:16px;background:#5a5a5a"></i>
<span class="t" style="left:1350.50px;top:984.30px;font: 400 14px/20px 'Liberation Sans',sans-serif;color:#f2f2f2;letter-spacing:-0.015px">validasi nik</span>
<i class="ab" style="left:1431.2px;top:986px;width:1px;height:16px;background:#5a5a5a"></i>
<span class="t" style="left:1445.20px;top:984.30px;font: 400 14px/20px 'Liberation Sans',sans-serif;color:#f2f2f2;letter-spacing:-0.252px">12. Coretax</span>
<i class="ab" style="left:1526.2px;top:986px;width:1px;height:16px;background:#5a5a5a"></i>
<span class="t" style="left:1540.50px;top:984.30px;font: 400 14px/20px 'Liberation Sans',sans-serif;color:#f2f2f2;letter-spacing:-0.243px">JAN-MEI</span>
<i class="ab" style="left:1607.2px;top:986px;width:1px;height:16px;background:#5a5a5a"></i>
<svg class="ab" style="left:1650px;top:988px" width="12" height="12" viewBox="0 0 12 12"><path d="M6 0.500V11.500M0.500 6H11.500" stroke="#d8d8d8" stroke-width="1.200"/></svg>
<i class="ab" style="left:1705.500px;top:988px;width:2.500px;height:2.500px;border-radius:1.300px;background:#d8d8d8;box-shadow:0 4.500px 0 #d8d8d8,0 9px 0 #d8d8d8"></i>
<svg class="ab" style="left:1727px;top:989px" width="8" height="10" viewBox="0 0 8 10"><path d="M7.500 0.500L0.500 5l7 4.500z" fill="#8a8a8a"/></svg>
<div class="ab" style="left:1740px;top:989.500px;width:17.500px;height:8.500px;border-radius:4.300px;background:#8f8f8f"></div>
<svg class="ab" style="left:1887px;top:989px" width="8" height="10" viewBox="0 0 8 10"><path d="M0.500 0.500L7.500 5l-7 4.500z" fill="#8a8a8a"/></svg>
</div>
<div id="statusbar">
<div class="ab" style="left:0;top:1010px;width:1920px;height:22px;background:#121212;border-top:1px solid #242424;box-sizing:border-box"></div>
<span class="t" style="left:10.50px;top:1011.80px;font: 400 11.8px/20px 'Liberation Sans',sans-serif;color:#f0f0f0;letter-spacing:-0.422px">Ready</span>
<span class="t" style="left:57.50px;top:1011.80px;font: 400 11.8px/20px 'Liberation Sans',sans-serif;color:#f0f0f0;letter-spacing:0.062px">Filter Mode</span>
<span class="t" style="left:132.80px;top:1011.80px;font: 400 11.8px/20px 'Liberation Sans',sans-serif;color:#f0f0f0;letter-spacing:-0.165px">Calculate</span>
<svg class="ab" style="left:199px;top:1014px" width="15" height="15" viewBox="0 0 15 15"><circle cx="7.500" cy="2.300" r="1.600" fill="none" stroke="#e0e0e0" stroke-width="1.100"/><path d="M1.500 5.200c2 .8 4 1 6 1s4-.2 6-1M5.500 6.500v3l-2.500 5M9.500 6.500v3l1 2" fill="none" stroke="#e0e0e0" stroke-width="1.100"/><path d="M9 10.500l4.500 4M13.500 10.500l-4.500 4" stroke="#e0e0e0" stroke-width="1.100"/></svg>
<span class="t" style="left:217.80px;top:1011.00px;font: 700 11.8px/20px 'Liberation Sans',sans-serif;color:#f0f0f0;letter-spacing:-0.549px">Accessibility: Investigate</span>
<span class="t" style="left:1317.20px;top:1011.80px;font: 400 11.8px/20px 'Liberation Sans',sans-serif;color:#f0f0f0;letter-spacing:-0.409px">Average: 238326,5867</span>
<span class="t" style="left:1443.50px;top:1011.80px;font: 400 11.8px/20px 'Liberation Sans',sans-serif;color:#f0f0f0;letter-spacing:-0.052px">Count: 57</span>
<span class="t" style="left:1509.50px;top:1011.80px;font: 400 11.8px/20px 'Liberation Sans',sans-serif;color:#f0f0f0;letter-spacing:-0.525px">Sum: 12392982,51</span>
<div class="ab" style="left:1620px;top:1010px;width:40px;height:22px;background:#2b2b2b"></div>
<svg class="ab" style="left:1632.5px;top:1014px" width="14" height="14" viewBox="0 0 14 14"><rect x="0.600" y="0.600" width="12.800" height="12.800" fill="none" stroke="#e6e6e6" stroke-width="1.200"/><path d="M0.600 4.800H13.400M0.600 9.200H13.400M4.800 0.600V13.400M9.200 0.600V13.400" stroke="#e6e6e6" stroke-width="1.100"/></svg>
<svg class="ab" style="left:1673px;top:1014px" width="14" height="14" viewBox="0 0 14 14"><rect x="0.600" y="0.600" width="12.800" height="12.800" fill="none" stroke="#e6e6e6" stroke-width="1.200"/><rect x="3.500" y="3.500" width="7" height="7" fill="none" stroke="#e6e6e6" stroke-width="1"/><path d="M5 5.800H9M5 8.200H9" stroke="#e6e6e6" stroke-width=".900"/></svg>
<svg class="ab" style="left:1712.5px;top:1014px" width="15" height="14" viewBox="0 0 15 14"><rect x="0.600" y="0.600" width="13.800" height="12.800" fill="none" stroke="#e6e6e6" stroke-width="1.200"/><path d="M5.500 0.600V6.500H14.400M9.800 0.600V6.500" fill="none" stroke="#e6e6e6" stroke-width="1.100"/></svg>
<i class="ab" style="left:1745.500px;top:1020.500px;width:8px;height:1.200px;background:#d8d8d8"></i>
<i class="ab" style="left:1759px;top:1020.700px;width:100px;height:1px;background:#9a9a9a"></i>
<i class="ab" style="left:1807.500px;top:1015.500px;width:4px;height:11px;background:#a8a8a8"></i>
<svg class="ab" style="left:1863px;top:1016.5px" width="10" height="10" viewBox="0 0 10 10"><path d="M5 0.500V9.500M0.500 5H9.500" stroke="#d8d8d8" stroke-width="1.200"/></svg>
<span class="t" style="left:1885.20px;top:1011.80px;font: 400 11.8px/20px 'Liberation Sans',sans-serif;color:#f0f0f0;letter-spacing:-0.797px">100%</span>
</div>
<div id="taskbar">
<div class="ab" style="left:0;top:1032px;width:1920px;height:48px;background:linear-gradient(90deg,#1c1c1c,#221e1c 50%,#1c1c1c);border-top:1px solid #343231;box-sizing:border-box"></div>
<svg class="ab" style="left:18px;top:1042px" width="28" height="28" viewBox="0 0 28 28"><path d="M2 13.500a10.500 10.500 0 0 1 21 0c-1.200-1.300-2.600-1.300-3.500 0-1.200-1.300-2.600-1.300-3.500 0-1.200-1.300-2.600-1.300-3.500 0-1.200-1.300-2.600-1.300-3.500 0-1.200-1.300-2.600-1.300-3.500 0-1.200-1.300-2.300-1.300-3.500 0z" fill="#4aa8e8"/><path d="M12.500 13V22.500a2 2 0 0 1-4 0" fill="none" stroke="#9a8f86" stroke-width="1.600"/></svg>
<div class="ab" style="left:31px;top:1039.500px;width:14.500px;height:14.500px;border-radius:7.300px;background:#f2838f"></div>
<span class="t" style="left:36.00px;top:1036.80px;font: 400 11px/20px 'Liberation Sans',sans-serif;color:#1a1a1a;letter-spacing:-1.125px">1</span>
<span class="t" style="left:49.50px;top:1038.30px;font: 400 12.4px/20px 'Liberation Sans',sans-serif;color:#fff;letter-spacing:0.003px">Hujan ringan</span>
<span class="t" style="left:49.50px;top:1054.00px;font: 400 12.4px/20px 'Liberation Sans',sans-serif;color:#c8c8c8;letter-spacing:0.092px">Hari ini</span>
<svg class="ab" style="left:638px;top:1044px" width="25" height="25" viewBox="0 0 25 25"><rect x="0" y="0" width="11.800" height="11.800" rx="1" fill="#6accf8"/><rect x="12.800" y="0" width="11.800" height="11.800" rx="1" fill="#4fbcf6"/><rect x="0" y="12.800" width="11.800" height="11.800" rx="1" fill="#3fb0f3"/><rect x="12.800" y="12.800" width="11.800" height="11.800" rx="1" fill="#2a9ff0"/></svg>
<div class="ab" style="left:675px;top:1040.500px;width:220px;height:31.500px;border-radius:16px;background:#3b3736;box-sizing:border-box;border:1px solid #4a4645"></div>
<svg class="ab" style="left:686px;top:1049px" width="16" height="16" viewBox="0 0 16 16"><circle cx="6.800" cy="6.800" r="5.300" fill="none" stroke="#f0f0f0" stroke-width="1.500"/><path d="M10.800 10.800L15 15" stroke="#f0f0f0" stroke-width="1.600" stroke-linecap="round"/></svg>
<span class="t" style="left:711.80px;top:1046.50px;font: 400 13.6px/20px 'Liberation Sans',sans-serif;color:#e8e8e8;letter-spacing:-0.280px">Search</span>
<svg class="ab" style="left:846px;top:1043px" width="44" height="28" viewBox="0 0 44 28"><ellipse cx="22" cy="24.500" rx="20" ry="2.800" fill="#b88a5a"/><path d="M8 6l3-4 2 3 5 3h12c3 0 5 2 5 5l1 6h-2l-1.500-5-1 5h-2l-.5-5.500-7 .5.500 5h-2l-1.500-5-1 5h-2l-.500-7-3-3-4 1-1.500-1.500z" fill="#d8d4e0"/><path d="M14 8l1 6M17 9l.500 6M20 9.500l.500 6M23 9.500v6M26 9.500v6M29 9.500l.500 5.500M32 10l1 4" stroke="#3a3450" stroke-width="1.300"/></svg>
<svg class="ab" style="left:906px;top:1044px" width="26" height="24" viewBox="0 0 26 24"><rect x="7" y="0.500" width="18" height="15" rx="1.500" fill="#e8e8e8"/><rect x="0.500" y="7" width="18" height="15" rx="1.500" fill="#8a8a8a" stroke="#1c1c1c" stroke-width="1"/></svg>
<svg class="ab" style="left:950px;top:1044px" width="26" height="24" viewBox="0 0 26 24"><path d="M1 3a2 2 0 0 1 2-2h6l3 3h11a2 2 0 0 1 2 2v3H1z" fill="#e8a820"/><rect x="1" y="6" width="24" height="16" rx="2" fill="#ffd04a"/><rect x="6" y="15" width="14" height="7" rx="1" fill="#2b84e0"/></svg>
<i class="ab" style="left:960px;top:1072.500px;width:6px;height:2.500px;border-radius:1.300px;background:#8a8a8a"></i>
<svg class="ab" style="left:994px;top:1043px" width="26" height="26" viewBox="0 0 26 26"><circle cx="13" cy="13" r="12.500" fill="#1b7fd0"/><path d="M2 16C2 7 8 2 14 2c6 0 10 4 10 9 0 3-2 5-5 5-2 0-3.500-1-3.500-2.500 0-2-3-3.500-6-2C6.500 13 5.500 17 8 21c-3-.500-6-2.500-6-5z" fill="#35c8b0"/><path d="M9.500 11.500c-3 1.500-4 5.500-1.500 9.500 3 3 9 3.500 13-.500-3 1.500-8 1-10-2.500-1.300-2.300-1.500-4.500-1.500-6.500z" fill="#0c4a9a"/></svg>
<svg class="ab" style="left:1039px;top:1043px" width="25" height="26" viewBox="0 0 25 26"><path d="M7.500 7V5a5 5 0 0 1 10 0v2" fill="none" stroke="#4ab0f0" stroke-width="1.800"/><rect x="1" y="6.500" width="23" height="18.500" rx="2.500" fill="#f2f2f2"/><rect x="7" y="10.500" width="5" height="5" fill="#f25022"/><rect x="13" y="10.500" width="5" height="5" fill="#7fba00"/><rect x="7" y="16.500" width="5" height="5" fill="#00a4ef"/><rect x="13" y="16.500" width="5" height="5" fill="#ffb900"/></svg>
<svg class="ab" style="left:1082px;top:1043px" width="26" height="26" viewBox="0 0 26 26"><path d="M13 1a12 12 0 0 0-10.300 18L1 25l6.200-1.600A12 12 0 1 0 13 1z" fill="#2bd366"/><path d="M13 3.500a9.500 9.500 0 0 0-8 14.600L4 22l4-1a9.500 9.500 0 1 0 5-17.500z" fill="none" stroke="#fff" stroke-width="1.500"/><path d="M9 8.500c-1 1-.800 3 1.200 5.300s4.300 3.200 5.600 2.500c1-.600 1.200-1.500.800-1.800l-1.800-1-1 1c-1-.300-2.800-2-3.300-3.200l.900-1-1-1.800c-.300-.400-.900-.500-1.400 0z" fill="#fff"/></svg>
<svg class="ab" style="left:1126px;top:1043px" width="26" height="26" viewBox="0 0 26 26"><circle cx="13" cy="13" r="12.500" fill="#fbbc05"/><path d="M13 .500A12.500 12.500 0 0 1 23.800 6.800H13A6.200 6.200 0 0 0 7.600 10L3 3.800A12.500 12.500 0 0 1 13 .500z" fill="#ea4335"/><path d="M2.200 6.800l5.400 9.300A6.200 6.200 0 0 0 13 19.200l-4 6.200A12.500 12.500 0 0 1 2.200 6.800z" fill="#34a853"/><circle cx="13" cy="13" r="5.600" fill="#fff"/><circle cx="13" cy="13" r="4.500" fill="#4285f4"/></svg>
<i class="ab" style="left:1136px;top:1072.500px;width:6px;height:2.500px;border-radius:1.300px;background:#8a8a8a"></i>
<svg class="ab" style="left:1171px;top:1044px" width="25" height="25" viewBox="0 0 25 25"><circle cx="12.500" cy="12.500" r="12" fill="#e8384a"/><path d="M7 18L12.500 6 18 18M12.500 6v0" fill="none" stroke="#fff" stroke-width="2.400" stroke-linejoin="round"/></svg>
<svg class="ab" style="left:1215px;top:1044px" width="24" height="24" viewBox="0 0 24 24"><rect x="0" y="0" width="24" height="24" rx="1.500" fill="#ef443b"/><path d="M9 6.500l5.500 5.500L9 17.500 6.500 15l3-3-3-3z" fill="#fff"/><path d="M14 6.500l5.500 5.500-5.500 5.500-1.800-1.800 3.700-3.700-3.700-3.700z" fill="#fff"/></svg>
<div class="ab" style="left:1250px;top:1036px;width:41px;height:41px;border-radius:5px;background:#2d2d2d;box-sizing:border-box;border:1px solid #3a3a3a"></div>
<svg class="ab" style="left:1257px;top:1044px" width="26" height="25" viewBox="0 0 26 25"><rect x="5" y="0" width="21" height="25" rx="2" fill="#21a366"/><rect x="15.500" y="0" width="10.500" height="8.300" fill="#33c481"/><rect x="15.500" y="8.300" width="10.500" height="8.300" fill="#107c41"/><rect x="5" y="16.600" width="21" height="8.400" fill="#185c37"/><rect x="0" y="6" width="14" height="14" rx="1.500" fill="#107c41"/><path d="M4 9.500L10 16.500M10 9.500L4 16.500" stroke="#fff" stroke-width="1.800"/></svg>
<i class="ab" style="left:1262.500px;top:1072.500px;width:16px;height:3px;border-radius:1.500px;background:#4cc2ff"></i>
<svg class="ab" style="left:1695.5px;top:1052px" width="13" height="8" viewBox="0 0 13 8"><path d="M1 7L6.500 1.500 12 7" fill="none" stroke="#f0f0f0" stroke-width="1.500"/></svg>
<svg class="ab" style="left:1725px;top:1048px" width="18" height="15" viewBox="0 0 18 15"><path d="M4.500 12.500a3.500 3.500 0 0 1 .500-7A5 5 0 0 1 14.500 6.500a3 3 0 0 1-.500 6z" fill="#8a8a8a"/><path d="M2 1.500L16 14" stroke="#c8c8c8" stroke-width="1.300"/></svg>
<svg class="ab" style="left:1757px;top:1046px" width="18" height="18" viewBox="0 0 18 18"><rect x="1" y="4" width="12.500" height="9" fill="none" stroke="#f0f0f0" stroke-width="1.300"/><path d="M4 16.500H10.500M7.300 13V16.500" stroke="#f0f0f0" stroke-width="1.300"/><rect x="12" y="1" width="4.500" height="9" rx=".800" fill="#1c1c1c" stroke="#f0f0f0" stroke-width="1.200"/><path d="M14.300 10v6.500H12" fill="none" stroke="#f0f0f0" stroke-width="1.200"/></svg>
<svg class="ab" style="left:1782px;top:1048px" width="18" height="15" viewBox="0 0 18 15"><path d="M1 5.500H3.500L7.500 2V13L3.500 9.500H1z" fill="none" stroke="#f0f0f0" stroke-width="1.200" stroke-linejoin="round"/><path d="M10 5a3.500 3.500 0 0 1 0 5M12.300 3a6.500 6.500 0 0 1 0 9M14.600 1.300a9 9 0 0 1 0 12.400" fill="none" stroke="#f0f0f0" stroke-width="1.100"/></svg>
<span class="t" style="left:1847.20px;top:1038.30px;font: 400 12.4px/20px 'Liberation Sans',sans-serif;color:#fff;letter-spacing:-0.203px">09:48</span>
<span class="t" style="left:1815.20px;top:1054.00px;font: 400 12.4px/20px 'Liberation Sans',sans-serif;color:#fff;letter-spacing:-0.002px">31/01/2026</span>
<svg class="ab" style="left:1885px;top:1047px" width="16" height="18" viewBox="0 0 16 18"><path d="M8 1a5.500 5.500 0 0 0-5.500 5.500V10L1 13h14l-1.500-3V6.500A5.500 5.500 0 0 0 8 1z" fill="#60cdff"/><path d="M5.800 14.500a2.300 2.300 0 0 0 4.400 0z" fill="#60cdff"/></svg>
</div>
</body></html>
